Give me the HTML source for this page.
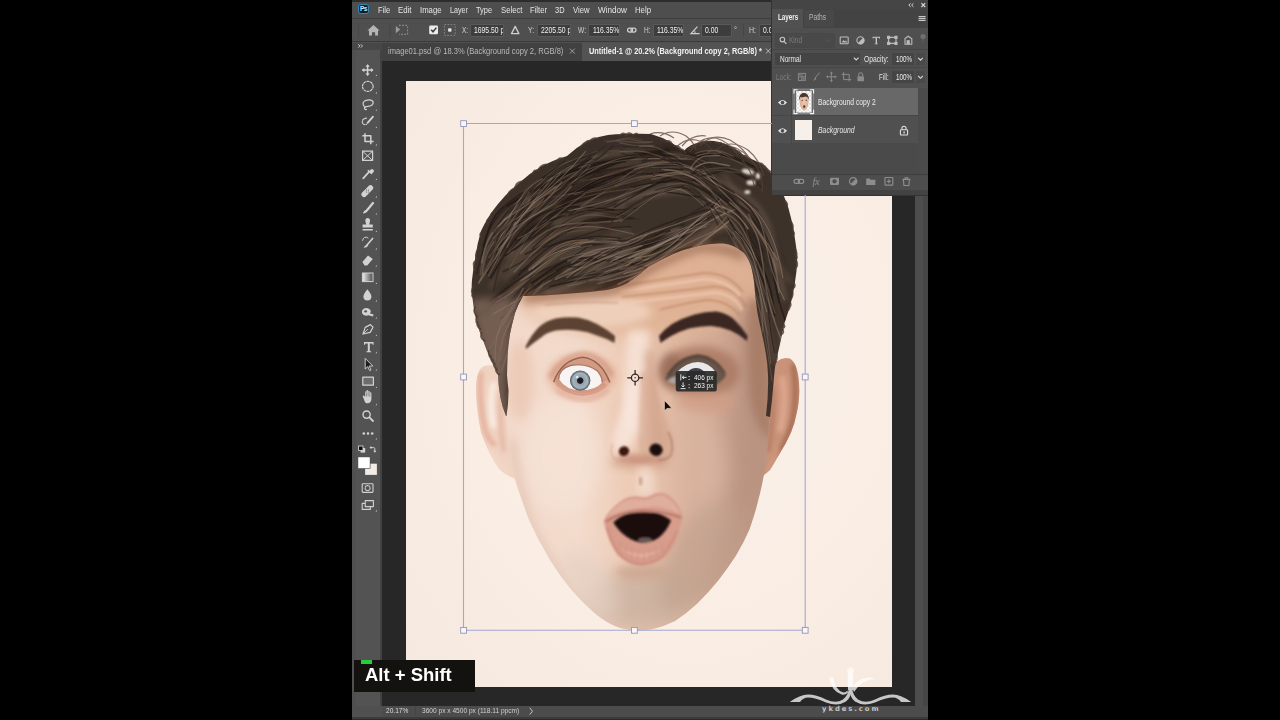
<!DOCTYPE html>
<html lang="en">
<head>
<meta charset="utf-8">
<title>Photoshop – Free Transform</title>
<style>
html,body{margin:0;padding:0;background:#000;}
body{width:1280px;height:720px;overflow:hidden;position:relative;font-family:"Liberation Sans",sans-serif;}
.a{position:absolute;}
.t{position:absolute;line-height:0;white-space:pre;transform-origin:0 50%;font-family:"Liberation Sans",sans-serif;}
#win{left:352px;top:0;width:576px;height:720px;background:#4f4f4f;overflow:hidden;}
/* all children of #stage use page coordinates */
#stage{left:0;top:0;width:1280px;height:720px;}
.inp{position:absolute;background:#3d3d3d;box-shadow:0 0 0 0.5px #646464;overflow:hidden;}
.inp span{position:absolute;left:2.6px;top:0;font-size:8.5px;line-height:10.8px;color:#f0f0f0;white-space:pre;transform:scaleX(0.8);transform-origin:0 50%;}
</style>
</head>
<body>
<div class="a" id="stage">
  <!-- window base -->
  <div class="a" style="left:352px;top:0;width:576px;height:720px;background:#505050;"></div>
  <!-- top dark hairline -->
  <div class="a" style="left:352px;top:0;width:576px;height:1.5px;background:#2c2c2c;"></div>
  <!-- menu bar -->
  <div class="a" style="left:352px;top:1.5px;width:420px;height:17px;background:#4e4e4e;"></div>
  <div class="a" style="left:352px;top:18px;width:420px;height:1.3px;background:#3e3e3e;"></div>
  <!-- options bar -->
  <div class="a" style="left:352px;top:19.3px;width:420px;height:22px;background:#4f4f4f;"></div>
  <div class="a" style="left:352px;top:41.2px;width:420px;height:1.3px;background:#3a3a3a;"></div>
  <!-- tab bar -->
  <div class="a" style="left:352px;top:42.5px;width:420px;height:18.5px;background:#414141;"></div>
  <div class="a" style="left:582px;top:43px;width:190px;height:18px;background:#535353;"></div>
  <!-- workspace -->
  <div class="a" style="left:381.7px;top:61px;width:533.6px;height:645px;background:#272727;"></div>
  <!-- left tool column -->
  <div class="a" style="left:352px;top:42.5px;width:29.7px;height:677.5px;background:#505050;"></div>
  <div class="a" style="left:356px;top:50px;width:24.5px;height:656px;background:#535353;"></div>
  <div class="a" style="left:352px;top:42.5px;width:29.7px;height:7.5px;background:#474747;"></div>
  <div class="a" style="left:379.6px;top:50px;width:2.1px;height:656px;background:#424242;"></div>
  <!-- right scrollbar strip -->
  <div class="a" style="left:915.3px;top:61px;width:12.5px;height:645px;background:#4d4d4d;"></div>
  <div class="a" style="left:923px;top:61px;width:5px;height:659px;background:#464646;"></div>
  <!-- status bar -->
  <div class="a" style="left:381.7px;top:705.7px;width:546px;height:11px;background:#4c4c4c;"></div>
  <div class="a" style="left:352px;top:716.6px;width:576px;height:3.4px;background:#3b3b3b;"></div>
  <div class="a" style="left:352px;top:719px;width:576px;height:1px;background:#2a2a2a;"></div>

  <!-- canvas document -->
  <div class="a" id="doc" style="left:406px;top:81px;width:485.7px;height:605.7px;background:#f9ede4;overflow:hidden;">
  </div>
  <svg class="a" id="photo" style="left:406px;top:81px;" width="485.7" height="605.7" viewBox="406 81 485.7 605.7">
    <defs>
      <radialGradient id="bgG" cx="0.58" cy="0.45" r="0.78">
        <stop offset="0" stop-color="#faf0e8"/><stop offset="0.6" stop-color="#f9ede4"/><stop offset="1" stop-color="#f6e9df"/>
      </radialGradient>
      <linearGradient id="skinG" x1="505" y1="0" x2="770" y2="0" gradientUnits="userSpaceOnUse">
        <stop offset="0" stop-color="#f2d9ca"/><stop offset="0.28" stop-color="#f3dccd"/><stop offset="0.5" stop-color="#ecc8b1"/>
        <stop offset="0.72" stop-color="#d7b09b"/><stop offset="1" stop-color="#bf9783"/>
      </linearGradient>
      <linearGradient id="hairG" x1="0" y1="134" x2="0" y2="420" gradientUnits="userSpaceOnUse">
        <stop offset="0" stop-color="#3a2f29"/><stop offset="0.5" stop-color="#3e312a"/><stop offset="1" stop-color="#41332a"/>
      </linearGradient>
      <radialGradient id="irisG" cx="0.5" cy="0.5" r="0.5">
        <stop offset="0" stop-color="#15171b"/><stop offset="0.27" stop-color="#1d2026"/><stop offset="0.36" stop-color="#93a2ae"/>
        <stop offset="0.74" stop-color="#a7b4be"/><stop offset="0.88" stop-color="#6d7c89"/><stop offset="1" stop-color="#48535e"/>
      </radialGradient>
      <filter id="b1" x="-20%" y="-20%" width="140%" height="140%"><feGaussianBlur stdDeviation="1"/></filter>
      <filter id="b2" x="-30%" y="-30%" width="160%" height="160%"><feGaussianBlur stdDeviation="2.2"/></filter>
      <filter id="b4" x="-40%" y="-40%" width="180%" height="180%"><feGaussianBlur stdDeviation="4.5"/></filter>
      <filter id="b8" x="-50%" y="-50%" width="200%" height="200%"><feGaussianBlur stdDeviation="9"/></filter>
      <filter id="b05" x="-10%" y="-10%" width="120%" height="120%"><feGaussianBlur stdDeviation="0.55"/></filter>
      <clipPath id="faceClip"><path id="faceP" d="M505 300 L504 375 Q505 420 512 465 L514.6 478 Q518 490 529 520 Q538 540 550 560 Q560 576 572 590.6 Q582 602 594 612.5 Q604 621 613.8 625.6 Q624 630 635.6 630.4 Q645 630.6 653 629 Q664 626.4 675 621 Q686 614 697 603.8 Q708 593 718.8 579.7 Q728 568 736 555.6 Q744 542 749.4 529.4 Q755 514 758 501 Q762 486 764 474 Q768 455 769 420 L769 300 Q764 215 640 210 Q516 215 505 300Z"/></clipPath>
      <clipPath id="hairClip"><path id="hairP" d="M506 416 Q499 400 498 375 Q494 364 492 361 Q486 350 483 340 Q479 331 477 323 Q474 312 473 302 Q471 290 472 280 Q473 270 475 260 Q477 244 481 231 Q488 216 498 204 Q508 192 519 183 Q530 173 542 166 Q554 160 567 156 Q577 147 587.5 141 Q598 136.4 608 135 Q618 133.6 629 134 Q640 133.4 651 134 Q662 137 672 143 Q679 148 684 151 Q690 144 700 142.6 Q707 140 714 141 Q721 142 728 145 Q737 150 745 156 Q754 160 762 164 Q767 168 770 172 Q778 184 784.5 197.5 Q789 208 791 218 Q794 229 795 239 Q797 250 797 260 Q797 271 795 282 Q793.6 292 791 302.5 Q788 313 784.5 323 Q782 334 780 344 Q778 353 776 361 Q774.6 369 774 377.5 Q773 390 772 400 L770 417 L766 416 Q768.6 395 768 375 Q767.6 364 766 354.6 Q764.4 344 762 334 Q759.4 323 757.5 313 Q756 302 755 292 Q754.4 281 752.5 272 Q750 260 744 253 Q735 245 723 243.6 Q710 243 698 246 Q685 249 673 254 Q660 260 648 267 Q638 276 627.5 283 Q618 288 607 290 Q586 293 565 294 Q544 296 523 296 Q518 304 515 313 Q512 324 510 334 Q508 346 507.5 357 L507 375 Q507.6 384 508.5 390 Q508.6 404 506.5 416Z"/></clipPath>
    </defs>
    <!-- backdrop -->
    <rect x="406" y="81" width="486" height="606" fill="url(#bgG)"/>

    <!-- ears -->
    <g filter="url(#b05)">
      <path id="earL" d="M503 374 Q494 362 483 366.6 Q475.4 372 476 392 Q476.6 412 481 432.5 Q485 444 489.6 453 Q494 462 500 470 Q507 476 515 478.6 L514 430Z" fill="#f0d2c1"/>
      <path id="earR" d="M768 372 Q778 355 790 358.6 Q799 364 799.4 391 Q799 404 797 412 Q795 423 791 432.5 Q786 444 780 453 Q775 462 770 470 L763 476 L764 430Z" fill="#c99279"/>
    </g>
    <clipPath id="earLc"><use href="#earL"/></clipPath>
    <clipPath id="earRc"><use href="#earR"/></clipPath>
    <g clip-path="url(#earLc)"><g filter="url(#b2)">
      <path d="M481 372 Q478 400 485 430 Q489 440 495 446" fill="none" stroke="#e0a793" stroke-width="4.5" opacity="0.85"/>
      <path d="M494 382 Q488 402 494 428" fill="none" stroke="#fbeee6" stroke-width="5.5" opacity="0.95"/>
      <path d="M502 392 Q498 420 504 452" fill="none" stroke="#e2b4a2" stroke-width="5" opacity="0.8"/>
      <path d="M488 448 Q496 464 510 474" fill="none" stroke="#f3d9cb" stroke-width="5" opacity="0.8"/>
    </g></g>
    <g clip-path="url(#earRc)"><g filter="url(#b2)">
      <path d="M793 364 Q798 390 793 420 Q788 438 778 456" fill="none" stroke="#a3694f" stroke-width="5" opacity="0.9"/>
      <path d="M782 376 Q787 400 780 432" fill="none" stroke="#dda88d" stroke-width="6.5" opacity="0.95"/>
      <path d="M772 388 Q774 420 768 452" fill="none" stroke="#b37b62" stroke-width="5" opacity="0.8"/>
      <path d="M778 448 Q774 462 766 472" fill="none" stroke="#cf9a82" stroke-width="5" opacity="0.8"/>
    </g></g>

    <!-- face base -->
    <use href="#faceP" fill="url(#skinG)" filter="url(#b05)"/>
    <g clip-path="url(#faceClip)">
      <!-- forehead tan -->
      <ellipse cx="640" cy="284" rx="130" ry="52" fill="#e0b294" opacity="0.9" filter="url(#b8)"/>
      <ellipse cx="592" cy="312" rx="60" ry="16" fill="#f2d6c2" opacity="0.8" filter="url(#b4)"/>
      <!-- right side shadow -->
      <path d="M770 300 L770 480 Q752 540 700 604 Q720 540 726 470 Q732 380 740 300Z" fill="#b28d7b" opacity="0.55" filter="url(#b8)"/>
      <path d="M690 400 Q720 420 730 470 Q720 540 690 580 Q700 500 690 400Z" fill="#dcb9a4" opacity="0.5" filter="url(#b8)"/>
      <path d="M771 300 L771 440 Q756 430 750 400 Q746 360 748 300Z" fill="#a2765f" opacity="0.7" filter="url(#b4)"/>
      <!-- left cheek highlight -->
      <ellipse cx="562" cy="455" rx="40" ry="58" fill="#f7e6db" opacity="0.55" filter="url(#b8)"/>
      <path d="M512 440 Q516 480 530 522 Q548 560 572 592 Q596 616 622 628" fill="none" stroke="#dfbfae" stroke-width="7" opacity="0.7" filter="url(#b4)"/>
      <!-- left temple pink -->
      <ellipse cx="520" cy="380" rx="14" ry="40" fill="#ecc6b3" opacity="0.7" filter="url(#b4)"/>
      <!-- eye sockets -->
      <ellipse cx="582" cy="376" rx="34" ry="22" fill="#e2ad95" opacity="0.8" filter="url(#b4)"/>
      <path d="M550 378 Q562 356 584 354 Q602 356 612 376" fill="none" stroke="#cf937a" stroke-width="5" opacity="0.7" filter="url(#b2)"/>
      <path d="M556 390 Q570 400 586 400 Q600 398 608 390" fill="none" stroke="#dfa792" stroke-width="4" opacity="0.7" filter="url(#b2)"/>
      <ellipse cx="700" cy="372" rx="40" ry="26" fill="#ab7963" opacity="0.88" filter="url(#b4)"/>
      <ellipse cx="671" cy="370" rx="12" ry="17" fill="#8c624f" opacity="0.6" filter="url(#b4)"/>
      <ellipse cx="706" cy="402" rx="30" ry="10" fill="#d09c84" opacity="0.7" filter="url(#b4)"/>
      <!-- between brows / nose bridge light -->
      <path d="M628 330 Q622 380 626 430 L644 436 Q646 380 650 330Z" fill="#f6e2d6" opacity="0.9" filter="url(#b4)"/>
      <!-- nose right side shadow -->
      <path d="M652 350 Q654 400 668 436 Q672 452 662 462 L650 456 Q648 400 646 352Z" fill="#c49078" opacity="0.75" filter="url(#b4)"/>
      <!-- nose left shading -->
      <path d="M618 400 Q612 430 610 450 Q616 460 626 458 Q622 430 624 400Z" fill="#e6bca6" opacity="0.7" filter="url(#b4)"/>
      <!-- under nose -->
      <ellipse cx="640" cy="462" rx="30" ry="7" fill="#d09f88" opacity="0.75" filter="url(#b4)"/>
      <path d="M638 466 L636 496 L656 494 L652 466Z" fill="#f6e6dc" opacity="0.6" filter="url(#b4)"/>
      <ellipse cx="640.6" cy="481" rx="1.8" ry="4.6" fill="#b98a76" opacity="0.6" filter="url(#b1)"/>
      <!-- chin stubble -->
      <ellipse cx="642" cy="600" rx="50" ry="30" fill="#ccb3a1" opacity="0.9" filter="url(#b8)"/>
      <ellipse cx="700" cy="556" rx="30" ry="62" fill="#bfa08d" opacity="0.7" filter="url(#b8)" transform="rotate(30 700 556)"/>
      <ellipse cx="590" cy="585" rx="22" ry="40" fill="#e3cfc1" opacity="0.7" filter="url(#b8)" transform="rotate(-35 590 585)"/>
      <!-- below lip shadow -->
      <ellipse cx="641" cy="572" rx="26" ry="7" fill="#c9a08a" opacity="0.7" filter="url(#b4)"/>
      <!-- forehead wrinkles -->
      <g fill="none" filter="url(#b1)">
        <g stroke="#b9805f" stroke-width="2" opacity="0.6">
          <path d="M620 286 Q662 279.6 703 273 Q728 272 743 292"/>
          <path d="M622 297 Q672 292 714 286.6 Q737 288 746 307"/>
          <path d="M660 309.6 Q686 303 706 300 Q728 300 740 316"/>
          <path d="M545 305 Q580 301 618 303" opacity="0.6"/>
        </g>
        <g stroke="#f3d3bc" stroke-width="2.4" opacity="0.65">
          <path d="M620 291.4 Q662 285.6 703 279.4 Q726 279 740 296"/>
          <path d="M630 302.6 Q672 297.6 714 292.6 Q734 294 742 310"/>
        </g>
      </g>
    </g>

    <!-- nose planes -->
    <g clip-path="url(#faceClip)">
      <path d="M641 372 Q638 410 637.6 444 Q640 462 650 460 Q666 462 672 448 Q674 436 664 420 Q652 396 647 372Z" fill="#d9ad96" opacity="0.7" filter="url(#b2)"/>
      <path d="M630 380 Q620 410 613 432 Q608 446 614 456 Q624 450 634 444 L636 380Z" fill="#f9e8df" opacity="0.8" filter="url(#b4)"/>
      <ellipse cx="640" cy="459" rx="22" ry="4.6" fill="#c9937c" opacity="0.7" filter="url(#b2)"/>
    </g>
    <!-- nostrils -->
    <g filter="url(#b1)">
      <ellipse cx="624" cy="451.2" rx="5.2" ry="4.8" fill="#3e120b" transform="rotate(-30 624 451.2)"/>
      <ellipse cx="656" cy="449.8" rx="6.6" ry="6.2" fill="#1c0c0a" transform="rotate(20 656 449.8)"/>
    </g>
    <g fill="none" filter="url(#b1)" opacity="0.6">
      <path d="M612.4 444 Q609.6 452 613.6 458 Q618 461 624 460" stroke="#d8a38c" stroke-width="1.6"/>
      <path d="M668 432 Q674.6 444 671 455 Q666 461 658 459.6" stroke="#a87660" stroke-width="2"/>
      <path d="M630 459 Q640 464 650 459" stroke="#c99078" stroke-width="1.6"/>
    </g>

    <!-- brows -->
    <g filter="url(#b1)">
      <path d="M525.6 346.6 Q531 335 539 327 Q546 321 555.5 318.6 Q566 316.6 578 317.6 Q588 319.4 597 324 Q607 329.4 615 336 L614.6 343 Q606 338 597 335.4 Q588 331.6 578 330.4 Q566 329.2 555.5 330.6 Q547 332.6 541.7 337 Q534 342.4 526 349Z" fill="#5b4233"/>
      <path d="M659 336 Q664.6 329 672 324 Q682 318 694.4 314.4 Q706 311.4 716.7 311.6 Q726 313 733 318.6 Q741 326 747.6 336 L747 341 Q739 334 730.5 330.4 Q721 327 711 326 Q700 326.2 689 328.6 Q680 331.4 672 335.6 Q666 339 660.6 343Z" fill="#3a2820"/>
    </g>

    <!-- left eye -->
    <g filter="url(#b05)">
      <path d="M553.6 382 Q562 360 582.6 357.6 Q601 359.6 609.6 382.4 Q599 394.4 582 394.8 Q565 394 553.6 382Z" fill="#d39a83" filter="url(#b1)"/>
      <path d="M559.2 379.4 Q559.6 369 571 366 Q586 363.4 597 371.4 Q602 377 601.6 383 Q596 390 581 390.2 Q566 390.2 559.2 379.4Z" fill="#f7f4f3"/>
      <circle cx="580.2" cy="380.6" r="10.2" fill="url(#irisG)"/>
      <circle cx="577.2" cy="377.2" r="1.4" fill="#e8eef4" opacity="0.85"/>
      <path d="M553.6 382 Q562 359.6 582.6 357.2 Q601 359.2 609.8 382.4" fill="none" stroke="#8a5846" stroke-width="1.6" opacity="0.85"/>
      <path d="M558.6 379.6 Q559 368.4 571 365.4 Q586 362.8 597.4 370.8 Q602.4 376.6 602.2 382" fill="none" stroke="#9a6a58" stroke-width="1.1" opacity="0.75"/>
      <path d="M557 384.6 Q568 394.6 583 395 Q597 394 606 385.6" fill="none" stroke="#d79d8a" stroke-width="1.5"/>
      <ellipse cx="606.6" cy="382.6" rx="2.4" ry="1.8" fill="#e3a998"/>
    </g>
    <!-- right eye -->
    <g filter="url(#b1)">
      <path d="M665 379 Q676 357 698 354.6 Q716 356 726 376 Q716 389 698 390 Q678 389 665 379Z" fill="#6a564c"/>
      <path d="M667.6 381 Q671 377 675.8 376.4 L675.8 384.4 Q671 384 667.6 381Z" fill="#d6cdc9" opacity="0.65"/>
    </g>
    <g filter="url(#b05)">
      <path d="M677 372 Q686 362.6 698 362 Q709 362.6 715.6 372 Q709 384 698 385 Q686 384 677 372Z" fill="#e9e9ec"/>
      <circle cx="696" cy="378.6" r="10.6" fill="#3f4045"/>
      <circle cx="696" cy="379" r="4" fill="#141416"/>
    </g>
    <path d="M668 376 Q678 358 698 356 Q716 357.6 725 374" fill="none" stroke="#4a3a33" stroke-width="2.4" opacity="0.7" filter="url(#b1)"/>

    <!-- mouth -->
    <g filter="url(#b1)">
      <!-- lip mass -->
      <path d="M603.6 521 Q609 509 622.5 500 Q632 494.6 641 497 Q646 498 650 496 Q657 491.6 664 493 Q671 496 676 502.6 Q681 509.6 683 517 Q681 526 677 538 Q671 553 662 559.6 Q651 566.4 640 566 Q628 565 617.6 555 Q609 543 603.6 521Z" fill="#d79c8b"/>
      <!-- upper lip lighter top -->
      <path d="M607 517 Q613 507.6 623.6 501.6 Q632 497.6 641 499.8 Q646 500.6 650.6 498.6 Q657 494.6 663.4 495.6 Q670 498.6 675 505 Q678 509 680 514 Q668 508 656 506.6 Q646 507 641 508 Q626 508.6 607 517Z" fill="#e0ae9d"/>
      <!-- lower lip highlight -->
      <path d="M620 548 Q630 557 641 558 Q652 557.4 661 549 Q652 553 641 553.6 Q630 553 620 548Z" fill="#e3b0a2" opacity="0.8"/>
    </g>
    <g filter="url(#b1)">
      <path d="M613.4 522.4 Q620 515.4 630 513.4 Q642 511.6 655 513 Q664 514.6 671 520.6 Q667 531 659 537.6 Q650 543.4 641 542.8 Q630 540.6 622 533 Q616 527 613.4 522.4Z" fill="#1c0c09"/>
      <ellipse cx="645" cy="540" rx="7" ry="2.6" fill="#a89892" opacity="0.55"/>
    </g>
    <g fill="none" filter="url(#b1)">
      <path d="M606 521.6 Q618 513 641 510.6 Q662 511 681 517.6" stroke="#8c4f41" stroke-width="1.8" opacity="0.55"/>
      <path d="M607 527 Q612 547 622 556.4 Q632 564 642 564 Q654 563 662 556 Q670 547 677 531" stroke="#c4877a" stroke-width="2" opacity="0.6"/>
      <path d="M626 546v8 M632 549v9 M638 550.6v10 M644 551v10 M650 550v10 M656 547.6v9 M662 544v8 M621 542l-2 6" stroke="#c07f72" stroke-width="0.9" opacity="0.5"/>
    </g>

    <!-- hair -->
    <use href="#hairP" fill="url(#hairG)" filter="url(#b05)"/>
    <g clip-path="url(#hairClip)" fill="none" stroke-linecap="round">
<g filter="url(#b2)">
<path d="M607.2 219.8C582.4 228.5 575.5 223.6 550.5 231.2" stroke="#2a201b" stroke-width="8.3" opacity="0.38"/>
<path d="M609.4 234.2C562.8 240.8 550.9 241.5 511.8 278.7" stroke="#2a201b" stroke-width="5.4" opacity="0.49"/>
<path d="M609.3 218.2C570.8 216.8 564.1 222.0 533.5 247.0" stroke="#1e1613" stroke-width="6.0" opacity="0.49"/>
<path d="M657.2 257.7C594.4 237.5 581.6 248.8 522.5 287.0" stroke="#2f251f" stroke-width="8.5" opacity="0.43"/>
<path d="M601.8 239.5C537.6 241.9 537.5 269.1 481.5 313.6" stroke="#231a16" stroke-width="6.5" opacity="0.52"/>
<path d="M617.6 257.6C587.8 260.4 581.7 264.4 551.5 272.5" stroke="#2f251f" stroke-width="5.5" opacity="0.46"/>
<path d="M587.1 243.2C559.7 253.9 554.6 259.1 526.0 268.9" stroke="#2f251f" stroke-width="7.1" opacity="0.50"/>
<path d="M650.6 273.5C677.3 259.4 680.3 250.3 713.0 240.1" stroke="#231a16" stroke-width="7.5" opacity="0.37"/>
<path d="M603.0 284.0C632.7 272.5 641.3 276.1 670.1 261.9" stroke="#1e1613" stroke-width="8.8" opacity="0.50"/>
<path d="M600.3 259.2C625.8 235.8 641.7 253.1 667.5 228.8" stroke="#231a16" stroke-width="7.1" opacity="0.39"/>
<path d="M616.5 278.9C657.4 267.8 666.1 263.5 701.9 236.3" stroke="#2a201b" stroke-width="8.2" opacity="0.54"/>
<path d="M604.5 285.5C659.5 278.5 661.4 256.6 707.9 227.5" stroke="#2f251f" stroke-width="8.7" opacity="0.60"/>
<path d="M551.9 275.6C618.2 267.4 621.8 235.0 682.7 226.2" stroke="#2a201b" stroke-width="6.6" opacity="0.53"/>
<path d="M559.7 195.5C588.1 172.2 595.7 170.1 631.9 170.3" stroke="#2a201b" stroke-width="9.5" opacity="0.60"/>
<path d="M520.4 229.2C572.4 168.4 604.0 201.8 667.4 168.1" stroke="#231a16" stroke-width="6.0" opacity="0.62"/>
<path d="M533.7 193.6C585.0 181.4 590.4 159.5 647.0 153.7" stroke="#2a201b" stroke-width="9.6" opacity="0.53"/>
<path d="M545.2 198.9C583.0 179.9 592.6 177.9 633.7 167.8" stroke="#231a16" stroke-width="8.9" opacity="0.43"/>
<path d="M537.1 196.6C582.8 179.1 590.9 167.5 640.6 159.8" stroke="#2a201b" stroke-width="7.7" opacity="0.52"/>
<path d="M546.3 217.9C569.0 196.5 573.6 190.2 606.8 186.9" stroke="#2a201b" stroke-width="8.3" opacity="0.60"/>
<path d="M530.8 236.3C578.7 190.0 601.0 206.2 662.7 184.9" stroke="#1e1613" stroke-width="10.0" opacity="0.50"/>
<path d="M724.7 185.8C737.9 206.4 744.5 208.1 763.5 227.2" stroke="#2f251f" stroke-width="9.9" opacity="0.43"/>
<path d="M732.2 190.6C761.7 220.1 771.6 225.9 783.3 276.2" stroke="#2a201b" stroke-width="6.4" opacity="0.60"/>
<path d="M721.4 199.3C746.3 221.8 742.7 234.1 767.3 267.3" stroke="#2a201b" stroke-width="6.3" opacity="0.43"/>
<path d="M733.0 234.4C741.1 261.7 739.7 270.3 761.5 307.7" stroke="#2a201b" stroke-width="5.2" opacity="0.40"/>
<path d="M713.7 195.5C743.8 208.3 749.2 212.9 762.1 248.7" stroke="#2a201b" stroke-width="9.4" opacity="0.58"/>
<path d="M743.2 209.2C762.5 252.1 781.7 259.4 779.9 328.5" stroke="#1e1613" stroke-width="6.2" opacity="0.47"/>
<path d="M623.8 205.7C593.2 211.5 587.7 218.7 555.0 223.1" stroke="#8f7b6a" stroke-width="4.2" opacity="0.34"/>
<path d="M597.6 228.5C553.1 229.1 545.3 235.3 510.7 268.4" stroke="#76614f" stroke-width="5.3" opacity="0.37"/>
<path d="M620.7 248.0C566.3 253.1 548.9 243.1 510.8 293.7" stroke="#7d6a5b" stroke-width="5.4" opacity="0.32"/>
<path d="M649.2 259.8C579.6 247.2 562.5 245.7 501.2 299.7" stroke="#76614f" stroke-width="5.1" opacity="0.34"/>
<path d="M581.6 220.7C541.4 247.0 520.3 238.0 490.5 286.8" stroke="#76614f" stroke-width="4.1" opacity="0.34"/>
<path d="M629.0 231.6C574.7 243.3 557.7 237.0 503.6 278.4" stroke="#9a8674" stroke-width="3.5" opacity="0.24"/>
<path d="M632.6 277.6C659.4 258.2 669.6 263.5 699.2 248.5" stroke="#8a6c58" stroke-width="4.5" opacity="0.32"/>
<path d="M658.8 268.9C683.4 262.7 685.3 255.2 706.1 240.1" stroke="#8f7b6a" stroke-width="6.6" opacity="0.42"/>
<path d="M589.8 279.1C615.7 265.3 622.2 262.8 652.8 254.0" stroke="#8f7b6a" stroke-width="4.7" opacity="0.37"/>
<path d="M600.0 280.6C620.5 265.5 630.5 276.0 652.5 261.1" stroke="#8f7b6a" stroke-width="4.5" opacity="0.46"/>
<path d="M658.1 268.5C684.9 245.9 689.9 238.9 725.4 226.0" stroke="#8a6c58" stroke-width="6.8" opacity="0.38"/>
<path d="M630.6 271.5C672.1 242.5 691.1 249.6 732.4 206.9" stroke="#76614f" stroke-width="4.6" opacity="0.40"/>
<path d="M566.1 271.6C613.1 245.1 624.2 239.6 678.0 228.9" stroke="#9a8674" stroke-width="5.4" opacity="0.36"/>
<path d="M546.5 292.8C592.9 284.2 591.0 256.7 636.9 251.0" stroke="#8f7b6a" stroke-width="5.3" opacity="0.41"/>
<path d="M724.6 175.4C753.8 217.1 755.0 232.6 790.3 281.8" stroke="#8a6c58" stroke-width="4.5" opacity="0.25"/>
<path d="M732.1 225.5C758.0 264.9 758.7 278.8 774.7 360.9" stroke="#8f7b6a" stroke-width="3.1" opacity="0.36"/>
<path d="M712.9 199.9C774.8 230.1 777.9 245.3 781.5 348.6" stroke="#8a6c58" stroke-width="5.4" opacity="0.23"/>
<path d="M738.8 202.7C770.0 220.3 763.6 232.6 775.7 269.9" stroke="#9a8674" stroke-width="5.0" opacity="0.30"/>
<path d="M712.7 178.7C777.3 204.0 769.2 226.4 785.2 299.1" stroke="#8f7b6a" stroke-width="3.6" opacity="0.35"/>
<path d="M547.0 188.5C599.5 145.1 616.5 151.2 679.9 154.9" stroke="#8f7b6a" stroke-width="3.6" opacity="0.35"/>
<path d="M522.0 215.3C570.5 182.0 582.7 173.2 644.9 159.3" stroke="#9a8674" stroke-width="3.9" opacity="0.31"/>
<path d="M544.7 224.4C599.0 189.0 620.5 208.3 685.3 183.9" stroke="#8f7b6a" stroke-width="3.3" opacity="0.31"/>
<path d="M514.6 222.2C527.8 199.2 541.7 208.1 560.1 188.2" stroke="#8a6c58" stroke-width="3.8" opacity="0.31"/>
<path d="M508.7 228.4C548.8 193.7 565.7 196.6 605.4 159.6" stroke="#1e1613" stroke-width="5.1" opacity="0.41"/>
<path d="M531.3 230.1C557.2 211.1 555.6 196.5 590.2 186.5" stroke="#1e1613" stroke-width="6.2" opacity="0.57"/>
<path d="M491.3 256.4C537.4 216.6 553.4 209.2 606.8 165.5" stroke="#231a16" stroke-width="6.3" opacity="0.37"/>
<path d="M511.4 230.7C547.7 206.4 547.9 187.8 597.3 173.1" stroke="#2f251f" stroke-width="6.4" opacity="0.42"/>
<path d="M532.4 224.3C557.1 197.8 571.3 207.1 602.8 185.9" stroke="#231a16" stroke-width="8.3" opacity="0.60"/>
<path d="M658.3 150.8C681.2 143.4 684.7 150.5 703.9 160.0" stroke="#231a16" stroke-width="5.7" opacity="0.50"/>
<path d="M644.6 159.8C666.7 146.4 671.6 151.2 692.9 160.5" stroke="#2f251f" stroke-width="7.7" opacity="0.40"/>
<path d="M644.9 159.1C675.1 149.8 679.7 164.5 705.7 166.8" stroke="#231a16" stroke-width="7.7" opacity="0.45"/>
<path d="M621.8 184.7C642.2 179.7 643.8 171.7 662.6 168.1" stroke="#2f251f" stroke-width="8.3" opacity="0.45"/>
<path d="M639.5 178.8C662.5 167.6 668.0 170.5 688.8 172.3" stroke="#76614f" stroke-width="5.8" opacity="0.21"/>
<path d="M649.7 195.8C666.8 192.2 670.4 191.6 685.9 192.7" stroke="#8f7b6a" stroke-width="5.7" opacity="0.27"/>
<path d="M622.1 200.8C670.1 185.9 683.4 168.0 718.5 215.6" stroke="#a5917f" stroke-width="5.7" opacity="0.29"/>
<path d="M487.0 240.8C514.9 198.0 524.0 189.5 570.8 163.8" stroke="#76614f" stroke-width="3.1" opacity="0.27"/>
<path d="M496.3 260.8C531.5 212.4 546.1 207.9 594.7 173.6" stroke="#a5917f" stroke-width="3.1" opacity="0.21"/>
<path d="M503.3 238.0C524.9 192.9 534.0 186.3 584.5 168.7" stroke="#8f7b6a" stroke-width="5.7" opacity="0.23"/>
<path d="M508.0 256.6C533.8 237.4 530.6 224.4 557.8 205.1" stroke="#8f7b6a" stroke-width="4.8" opacity="0.27"/>
</g>
<g filter="url(#b05)">
<path d="M632.7 218.5C581.2 217.4 573.5 230.1 525.4 254.1" stroke="#231a16" stroke-width="1.9" opacity="0.69"/>
<path d="M639.0 219.5C602.8 211.7 593.8 203.7 559.0 226.1" stroke="#2f251f" stroke-width="1.2" opacity="0.68"/>
<path d="M620.5 238.6C568.9 227.9 566.3 255.4 519.9 271.2" stroke="#231a16" stroke-width="1.1" opacity="0.73"/>
<path d="M574.7 207.4C552.4 227.4 538.1 215.8 515.6 240.6" stroke="#231a16" stroke-width="1.7" opacity="0.66"/>
<path d="M600.9 239.8C556.3 235.2 550.1 244.1 518.5 275.0" stroke="#231a16" stroke-width="1.2" opacity="0.82"/>
<path d="M603.7 202.4C557.7 208.5 548.0 212.6 511.8 245.8" stroke="#2f251f" stroke-width="1.4" opacity="0.71"/>
<path d="M636.1 207.9C581.7 218.9 557.2 190.2 510.7 250.3" stroke="#231a16" stroke-width="1.2" opacity="0.73"/>
<path d="M606.8 222.2C571.1 224.3 560.7 219.1 532.4 248.6" stroke="#231a16" stroke-width="1.1" opacity="0.81"/>
<path d="M614.3 209.8C544.7 201.5 531.5 206.1 490.7 278.1" stroke="#1e1613" stroke-width="1.8" opacity="0.69"/>
<path d="M652.2 260.4C583.5 269.4 569.6 278.3 496.0 312.1" stroke="#2f251f" stroke-width="1.0" opacity="0.83"/>
<path d="M596.1 258.8C562.2 254.8 559.0 265.7 531.2 283.3" stroke="#1e1613" stroke-width="1.6" opacity="0.81"/>
<path d="M615.7 203.7C589.9 215.2 580.4 204.2 555.9 220.4" stroke="#1e1613" stroke-width="1.1" opacity="0.61"/>
<path d="M619.8 219.0C558.5 213.5 559.8 247.1 503.3 271.5" stroke="#1e1613" stroke-width="1.5" opacity="0.53"/>
<path d="M595.2 241.0C555.6 273.7 533.1 263.2 484.2 312.1" stroke="#2a201b" stroke-width="1.4" opacity="0.78"/>
<path d="M646.6 267.7C569.8 248.2 557.9 265.6 500.6 318.9" stroke="#231a16" stroke-width="2.0" opacity="0.70"/>
<path d="M629.8 240.2C563.1 245.5 550.4 256.3 490.2 300.4" stroke="#1e1613" stroke-width="1.9" opacity="0.58"/>
<path d="M599.0 206.6C564.5 215.2 554.5 213.4 525.1 240.5" stroke="#2f251f" stroke-width="1.2" opacity="0.58"/>
<path d="M631.2 226.6C589.4 227.0 583.2 239.3 543.4 247.4" stroke="#231a16" stroke-width="1.3" opacity="0.57"/>
<path d="M568.7 213.7C534.6 219.0 533.7 231.3 507.0 253.3" stroke="#76614f" stroke-width="0.8" opacity="0.58"/>
<path d="M619.1 242.0C569.6 237.0 563.6 251.0 520.9 280.8" stroke="#a5917f" stroke-width="1.0" opacity="0.55"/>
<path d="M592.2 245.1C545.7 253.2 542.4 269.7 498.7 297.6" stroke="#8a6c58" stroke-width="1.2" opacity="0.48"/>
<path d="M649.2 259.5C612.9 260.7 604.3 247.3 568.0 260.6" stroke="#9a8674" stroke-width="1.8" opacity="0.41"/>
<path d="M568.1 215.3C538.8 225.0 536.4 234.2 510.2 253.3" stroke="#8a6c58" stroke-width="1.6" opacity="0.38"/>
<path d="M622.3 218.7C588.0 213.3 579.6 210.4 550.1 234.7" stroke="#76614f" stroke-width="1.3" opacity="0.41"/>
<path d="M633.9 234.0C571.9 219.3 559.7 224.0 514.2 272.0" stroke="#8a6c58" stroke-width="1.2" opacity="0.62"/>
<path d="M616.9 238.8C556.8 236.5 553.4 258.2 504.5 298.3" stroke="#76614f" stroke-width="1.5" opacity="0.44"/>
<path d="M586.5 230.3C557.3 231.5 553.4 237.6 530.1 256.8" stroke="#7d6a5b" stroke-width="0.8" opacity="0.35"/>
<path d="M587.9 239.6C557.2 240.4 554.0 248.5 529.0 268.9" stroke="#8a6c58" stroke-width="1.6" opacity="0.53"/>
<path d="M637.3 248.2C603.1 255.7 594.1 247.9 560.7 259.3" stroke="#8f7b6a" stroke-width="0.9" opacity="0.48"/>
<path d="M628.5 242.5C584.7 246.0 569.8 230.4 532.4 268.4" stroke="#9a8674" stroke-width="1.5" opacity="0.40"/>
<path d="M580.3 246.2C554.9 250.3 550.4 254.2 528.9 270.6" stroke="#9a8674" stroke-width="1.1" opacity="0.59"/>
<path d="M621.0 219.8C576.6 228.4 559.0 210.7 520.5 253.3" stroke="#8f7b6a" stroke-width="1.7" opacity="0.45"/>
<path d="M595.4 239.9C545.7 252.5 545.5 274.5 495.7 302.2" stroke="#8f7b6a" stroke-width="1.1" opacity="0.35"/>
<path d="M599.0 251.5C557.5 276.0 547.9 283.1 493.4 313.9" stroke="#8f7b6a" stroke-width="1.4" opacity="0.52"/>
<path d="M532.2 277.5C519.4 290.9 515.2 293.2 503.6 311.8" stroke="#231a16" stroke-width="1.2" opacity="0.53"/>
<path d="M529.6 290.7C504.7 315.0 515.7 330.2 493.5 380.4" stroke="#231a16" stroke-width="1.6" opacity="0.56"/>
<path d="M519.4 301.5C518.7 318.3 508.5 319.4 506.7 341.2" stroke="#2a201b" stroke-width="1.1" opacity="0.62"/>
<path d="M525.3 304.8C501.5 330.7 524.7 345.9 504.1 396.4" stroke="#231a16" stroke-width="0.9" opacity="0.42"/>
<path d="M534.2 285.1C517.6 291.3 523.4 300.8 510.4 315.2" stroke="#1e1613" stroke-width="1.8" opacity="0.45"/>
<path d="M522.1 296.3C501.6 313.9 502.1 320.9 499.2 356.0" stroke="#2f251f" stroke-width="0.9" opacity="0.45"/>
<path d="M538.5 285.3C527.7 299.3 516.1 296.3 511.0 322.0" stroke="#2f251f" stroke-width="1.6" opacity="0.63"/>
<path d="M534.6 294.6C525.1 303.1 521.2 304.6 517.2 322.6" stroke="#2a201b" stroke-width="1.1" opacity="0.63"/>
<path d="M531.2 283.7C522.1 300.5 514.9 301.4 502.9 323.9" stroke="#8a6c58" stroke-width="1.2" opacity="0.32"/>
<path d="M523.1 288.2C512.4 314.3 494.3 315.7 495.0 360.1" stroke="#9a8674" stroke-width="1.2" opacity="0.44"/>
<path d="M521.2 302.0C509.0 322.1 512.7 330.0 500.4 360.7" stroke="#76614f" stroke-width="1.4" opacity="0.36"/>
<path d="M528.1 296.9C511.9 322.2 495.9 326.7 499.1 382.3" stroke="#8a6c58" stroke-width="1.5" opacity="0.29"/>
<path d="M542.2 286.5C518.2 306.7 518.2 317.1 501.8 371.0" stroke="#9a8674" stroke-width="1.4" opacity="0.31"/>
<path d="M526.2 301.3C521.0 313.9 523.0 318.6 512.7 334.8" stroke="#8a6c58" stroke-width="1.0" opacity="0.42"/>
<path d="M543.9 282.0C529.1 305.3 509.7 302.7 500.8 349.7" stroke="#8f7b6a" stroke-width="1.0" opacity="0.28"/>
<path d="M555.4 271.2C519.2 291.2 515.2 302.6 489.2 349.3" stroke="#9a8674" stroke-width="0.9" opacity="0.34"/>
<path d="M556.8 280.1C623.9 242.2 637.1 231.4 706.7 209.6" stroke="#1e1613" stroke-width="1.5" opacity="0.61"/>
<path d="M550.0 279.1C599.1 276.6 609.4 274.2 647.7 241.1" stroke="#2f251f" stroke-width="2.1" opacity="0.53"/>
<path d="M588.0 275.4C655.0 269.4 655.5 240.3 711.0 216.9" stroke="#1e1613" stroke-width="1.4" opacity="0.51"/>
<path d="M586.9 266.8C628.2 243.4 637.7 237.8 683.5 224.2" stroke="#2a201b" stroke-width="1.7" opacity="0.75"/>
<path d="M631.6 262.2C677.1 243.2 679.0 224.0 727.8 209.4" stroke="#2f251f" stroke-width="2.1" opacity="0.67"/>
<path d="M619.1 259.7C645.7 246.7 651.0 242.2 679.8 234.3" stroke="#1e1613" stroke-width="2.0" opacity="0.82"/>
<path d="M586.0 281.8C611.6 273.8 614.1 263.2 643.6 257.8" stroke="#231a16" stroke-width="1.3" opacity="0.69"/>
<path d="M553.0 277.6C580.0 256.8 588.1 256.4 622.2 249.5" stroke="#2f251f" stroke-width="1.5" opacity="0.71"/>
<path d="M609.4 255.3C638.0 247.9 644.5 246.9 669.7 231.0" stroke="#231a16" stroke-width="1.7" opacity="0.71"/>
<path d="M624.8 259.7C674.0 253.3 672.1 225.0 721.9 212.5" stroke="#2f251f" stroke-width="1.6" opacity="0.84"/>
<path d="M550.0 286.4C633.4 267.4 656.8 273.5 719.2 198.4" stroke="#231a16" stroke-width="1.7" opacity="0.78"/>
<path d="M568.7 267.1C619.6 266.1 622.3 242.4 669.8 230.1" stroke="#231a16" stroke-width="1.3" opacity="0.73"/>
<path d="M605.1 256.9C657.4 241.5 663.6 227.8 712.8 201.4" stroke="#2f251f" stroke-width="1.9" opacity="0.76"/>
<path d="M621.5 277.7C651.0 259.2 657.9 256.0 691.5 246.4" stroke="#1e1613" stroke-width="1.6" opacity="0.63"/>
<path d="M587.3 260.2C617.1 237.2 632.3 254.1 662.6 231.0" stroke="#1e1613" stroke-width="1.5" opacity="0.52"/>
<path d="M595.4 289.8C627.5 282.3 631.8 272.7 664.2 264.6" stroke="#1e1613" stroke-width="2.0" opacity="0.53"/>
<path d="M574.6 275.7C633.3 231.0 666.7 260.7 722.9 197.1" stroke="#7d6a5b" stroke-width="1.1" opacity="0.56"/>
<path d="M614.0 262.9C662.3 244.2 672.0 238.5 716.7 208.1" stroke="#8f7b6a" stroke-width="1.0" opacity="0.47"/>
<path d="M634.4 258.0C684.8 253.2 678.4 223.2 721.0 205.6" stroke="#9a8674" stroke-width="1.1" opacity="0.63"/>
<path d="M637.8 276.7C672.6 273.5 676.2 264.8 702.3 243.0" stroke="#9a8674" stroke-width="1.4" opacity="0.42"/>
<path d="M604.3 271.8C655.5 260.7 656.8 235.2 709.8 223.9" stroke="#7d6a5b" stroke-width="1.2" opacity="0.49"/>
<path d="M597.9 283.7C633.9 274.7 641.7 272.4 676.0 258.0" stroke="#a5917f" stroke-width="1.0" opacity="0.44"/>
<path d="M606.1 273.9C660.8 246.8 667.3 230.7 721.0 211.7" stroke="#8f7b6a" stroke-width="0.8" opacity="0.40"/>
<path d="M572.4 283.5C626.9 243.7 642.0 240.1 706.8 221.7" stroke="#76614f" stroke-width="1.0" opacity="0.53"/>
<path d="M589.4 280.1C616.9 279.1 620.7 271.3 646.9 259.4" stroke="#76614f" stroke-width="1.2" opacity="0.51"/>
<path d="M571.5 263.1C601.3 238.2 616.7 256.7 646.9 234.8" stroke="#9a8674" stroke-width="1.3" opacity="0.50"/>
<path d="M629.0 280.8C670.8 251.8 680.2 244.7 727.0 226.0" stroke="#9a8674" stroke-width="1.2" opacity="0.44"/>
<path d="M596.6 270.7C635.8 256.8 643.4 251.1 682.0 238.8" stroke="#7d6a5b" stroke-width="1.3" opacity="0.47"/>
<path d="M610.6 261.6C640.2 246.9 650.4 252.5 677.9 234.8" stroke="#8f7b6a" stroke-width="1.3" opacity="0.65"/>
<path d="M628.4 258.3C664.2 242.1 673.7 241.4 706.6 218.1" stroke="#a5917f" stroke-width="1.0" opacity="0.59"/>
<path d="M568.1 285.7C604.0 280.7 606.8 266.0 641.2 258.0" stroke="#8a6c58" stroke-width="1.6" opacity="0.42"/>
<path d="M618.1 284.2C666.3 261.0 681.2 261.1 730.2 220.2" stroke="#9a8674" stroke-width="1.6" opacity="0.63"/>
<path d="M566.6 277.7C624.4 233.3 643.8 239.0 711.7 210.7" stroke="#8f7b6a" stroke-width="1.1" opacity="0.56"/>
<path d="M620.0 269.3C650.8 265.7 654.8 258.1 681.0 243.4" stroke="#76614f" stroke-width="1.7" opacity="0.46"/>
<path d="M624.0 273.8C679.5 258.8 678.4 230.9 735.7 209.1" stroke="#9a8674" stroke-width="1.2" opacity="0.60"/>
<path d="M608.1 280.7C670.9 264.8 685.2 261.1 727.2 216.6" stroke="#76614f" stroke-width="1.8" opacity="0.56"/>
<path d="M626.4 265.5C660.0 242.6 668.2 238.8 706.1 226.1" stroke="#9a8674" stroke-width="1.7" opacity="0.45"/>
<path d="M555.5 279.3C593.9 263.1 602.0 258.4 641.6 245.9" stroke="#9a8674" stroke-width="1.9" opacity="0.49"/>
<path d="M512.9 210.6C580.4 181.7 591.7 150.7 685.6 155.1" stroke="#231a16" stroke-width="1.1" opacity="0.74"/>
<path d="M535.9 196.9C569.8 166.6 578.2 160.3 625.5 162.2" stroke="#1e1613" stroke-width="0.9" opacity="0.85"/>
<path d="M504.3 222.1C568.3 170.0 587.0 162.0 668.3 151.2" stroke="#2f251f" stroke-width="1.9" opacity="0.73"/>
<path d="M575.6 192.8C617.7 162.6 633.4 181.5 683.2 168.9" stroke="#1e1613" stroke-width="1.2" opacity="0.72"/>
<path d="M541.3 188.5C588.8 176.1 599.0 168.5 649.1 152.2" stroke="#1e1613" stroke-width="1.9" opacity="0.83"/>
<path d="M536.1 209.2C601.7 187.5 612.2 164.3 687.6 163.0" stroke="#231a16" stroke-width="1.1" opacity="0.63"/>
<path d="M549.6 220.8C604.1 205.0 618.2 204.0 671.1 176.0" stroke="#1e1613" stroke-width="1.1" opacity="0.60"/>
<path d="M527.8 234.5C569.3 209.1 571.1 187.5 626.6 184.5" stroke="#2f251f" stroke-width="1.8" opacity="0.75"/>
<path d="M512.1 235.2C546.7 214.1 550.8 203.7 587.3 187.9" stroke="#2f251f" stroke-width="1.0" opacity="0.73"/>
<path d="M564.4 193.5C598.1 186.8 604.1 179.7 638.7 167.7" stroke="#1e1613" stroke-width="1.1" opacity="0.73"/>
<path d="M561.7 181.1C590.8 168.3 597.7 166.2 629.3 159.3" stroke="#231a16" stroke-width="1.8" opacity="0.83"/>
<path d="M538.6 206.2C558.1 181.2 570.4 189.9 595.0 175.0" stroke="#231a16" stroke-width="2.0" opacity="0.66"/>
<path d="M569.1 204.7C607.7 195.6 615.5 190.5 653.8 175.3" stroke="#2f251f" stroke-width="1.8" opacity="0.54"/>
<path d="M512.6 229.6C572.1 169.3 593.1 167.5 681.7 164.9" stroke="#1e1613" stroke-width="1.7" opacity="0.51"/>
<path d="M507.2 205.9C572.6 163.6 592.3 165.1 668.6 150.1" stroke="#231a16" stroke-width="1.8" opacity="0.83"/>
<path d="M541.4 178.1C597.4 169.5 608.9 155.0 668.2 149.2" stroke="#231a16" stroke-width="1.4" opacity="0.58"/>
<path d="M536.5 200.3C592.9 160.8 609.4 157.6 686.9 158.5" stroke="#8f7b6a" stroke-width="1.2" opacity="0.37"/>
<path d="M548.2 197.7C594.0 190.9 605.0 188.2 649.3 162.4" stroke="#7d6a5b" stroke-width="0.8" opacity="0.44"/>
<path d="M568.9 210.8C605.4 202.4 613.4 199.3 650.5 184.8" stroke="#9a8674" stroke-width="1.2" opacity="0.46"/>
<path d="M580.6 206.4C632.6 172.9 646.5 172.5 707.7 178.4" stroke="#76614f" stroke-width="1.5" opacity="0.47"/>
<path d="M575.2 180.4C611.8 179.3 618.1 168.8 655.7 162.5" stroke="#8a6c58" stroke-width="0.9" opacity="0.35"/>
<path d="M573.0 183.6C614.5 175.1 622.8 168.8 663.1 158.4" stroke="#7d6a5b" stroke-width="1.0" opacity="0.32"/>
<path d="M510.5 225.0C580.4 199.9 585.3 166.5 668.3 162.3" stroke="#8a6c58" stroke-width="0.9" opacity="0.36"/>
<path d="M568.7 193.9C603.2 189.3 610.2 185.4 642.0 171.5" stroke="#76614f" stroke-width="0.9" opacity="0.46"/>
<path d="M574.0 213.2C622.3 177.6 633.1 169.6 696.3 178.6" stroke="#7d6a5b" stroke-width="1.0" opacity="0.44"/>
<path d="M548.8 194.7C600.2 169.8 607.8 148.1 674.7 158.3" stroke="#8a6c58" stroke-width="1.3" opacity="0.46"/>
<path d="M577.2 210.9C617.6 208.4 619.4 184.9 661.8 183.2" stroke="#7d6a5b" stroke-width="1.4" opacity="0.33"/>
<path d="M573.8 194.7C625.8 187.6 636.1 175.6 692.3 171.3" stroke="#76614f" stroke-width="1.1" opacity="0.48"/>
<path d="M734.4 239.8C744.4 260.2 751.2 263.5 759.1 295.0" stroke="#1e1613" stroke-width="1.9" opacity="0.52"/>
<path d="M710.6 188.8C747.6 218.8 767.3 222.7 778.9 302.6" stroke="#2a201b" stroke-width="2.0" opacity="0.58"/>
<path d="M714.4 192.3C739.8 210.0 738.3 221.2 764.0 251.2" stroke="#2a201b" stroke-width="1.1" opacity="0.52"/>
<path d="M740.4 233.8C744.9 260.7 764.2 260.8 765.8 301.1" stroke="#2f251f" stroke-width="1.2" opacity="0.68"/>
<path d="M690.9 167.2C721.0 184.1 729.5 186.5 758.6 210.2" stroke="#2a201b" stroke-width="0.9" opacity="0.68"/>
<path d="M726.0 208.4C744.1 219.6 743.2 226.4 755.8 247.5" stroke="#231a16" stroke-width="1.6" opacity="0.69"/>
<path d="M736.6 215.9C754.5 231.0 747.1 241.9 764.9 262.3" stroke="#2f251f" stroke-width="1.1" opacity="0.52"/>
<path d="M710.6 177.5C743.9 200.9 754.0 205.3 773.2 251.7" stroke="#1e1613" stroke-width="1.1" opacity="0.77"/>
<path d="M741.2 235.1C776.9 268.3 760.6 285.1 774.5 352.6" stroke="#1e1613" stroke-width="0.9" opacity="0.75"/>
<path d="M726.1 212.0C738.3 249.0 768.7 246.7 774.4 315.6" stroke="#1e1613" stroke-width="1.6" opacity="0.76"/>
<path d="M748.7 215.7C780.4 249.0 764.8 266.2 785.6 321.1" stroke="#1e1613" stroke-width="1.8" opacity="0.62"/>
<path d="M709.0 191.3C758.3 212.1 738.1 237.4 772.4 299.8" stroke="#231a16" stroke-width="1.8" opacity="0.73"/>
<path d="M727.3 193.4C748.9 216.9 761.5 217.8 772.7 257.6" stroke="#231a16" stroke-width="1.2" opacity="0.66"/>
<path d="M719.2 194.1C749.4 211.5 762.0 212.1 769.4 258.7" stroke="#231a16" stroke-width="1.1" opacity="0.70"/>
<path d="M700.6 194.2C720.2 210.6 732.4 203.9 748.0 228.8" stroke="#a5917f" stroke-width="1.6" opacity="0.57"/>
<path d="M729.6 202.3C778.1 238.6 750.1 265.2 780.9 338.2" stroke="#a5917f" stroke-width="1.5" opacity="0.44"/>
<path d="M702.5 170.1C732.4 205.3 747.1 209.4 777.5 259.8" stroke="#8f7b6a" stroke-width="1.2" opacity="0.58"/>
<path d="M733.4 232.4C745.4 267.6 749.0 277.1 768.3 334.9" stroke="#7d6a5b" stroke-width="0.9" opacity="0.40"/>
<path d="M744.2 223.2C755.8 259.4 755.9 269.9 774.9 319.9" stroke="#7d6a5b" stroke-width="0.9" opacity="0.45"/>
<path d="M711.0 211.6C748.6 246.7 757.8 258.5 770.8 363.6" stroke="#9a8674" stroke-width="1.2" opacity="0.36"/>
<path d="M735.3 193.4C777.3 222.7 755.5 245.8 784.3 299.6" stroke="#a5917f" stroke-width="1.1" opacity="0.46"/>
<path d="M711.7 196.0C740.2 233.0 754.8 239.5 775.0 312.9" stroke="#76614f" stroke-width="1.3" opacity="0.57"/>
<path d="M690.8 168.9C739.8 201.7 768.7 197.4 782.8 277.7" stroke="#a5917f" stroke-width="1.0" opacity="0.52"/>
<path d="M748.6 214.7C762.6 244.5 775.7 248.3 778.9 292.4" stroke="#8f7b6a" stroke-width="1.7" opacity="0.51"/>
<path d="M735.5 231.4C758.4 256.2 754.2 266.9 766.8 311.9" stroke="#a5917f" stroke-width="1.0" opacity="0.57"/>
<path d="M733.4 237.9C744.7 270.0 764.6 273.5 762.4 332.0" stroke="#8f7b6a" stroke-width="1.6" opacity="0.38"/>
<path d="M725.4 227.7C748.8 268.1 756.9 280.3 772.1 380.7" stroke="#9a8674" stroke-width="0.9" opacity="0.38"/>
<path d="M708.5 207.5C739.5 215.5 741.4 223.0 756.2 260.1" stroke="#9a8674" stroke-width="1.3" opacity="0.43"/>
<path d="M489.3 243.5C502.0 222.7 499.8 213.7 524.2 200.4" stroke="#2f251f" stroke-width="1.6" opacity="0.55"/>
<path d="M482.0 255.4C489.8 215.7 497.7 210.8 530.6 188.8" stroke="#231a16" stroke-width="1.1" opacity="0.59"/>
<path d="M514.7 217.6C549.0 191.3 553.7 178.6 598.9 171.8" stroke="#231a16" stroke-width="1.0" opacity="0.54"/>
<path d="M499.9 256.2C520.0 211.6 541.6 218.0 571.7 182.5" stroke="#2a201b" stroke-width="1.0" opacity="0.70"/>
<path d="M507.6 226.2C522.8 200.6 524.3 192.7 554.1 180.6" stroke="#2a201b" stroke-width="1.7" opacity="0.71"/>
<path d="M483.0 246.4C491.4 215.6 495.8 210.6 522.5 192.5" stroke="#231a16" stroke-width="1.3" opacity="0.84"/>
<path d="M528.5 238.8C553.7 198.6 572.6 210.4 614.3 186.8" stroke="#1e1613" stroke-width="1.3" opacity="0.56"/>
<path d="M514.3 249.6C544.8 229.2 550.9 222.8 582.4 196.5" stroke="#231a16" stroke-width="1.9" opacity="0.60"/>
<path d="M493.8 236.9C539.5 204.2 529.4 167.8 597.7 158.8" stroke="#2f251f" stroke-width="1.6" opacity="0.64"/>
<path d="M493.8 290.4C504.1 237.6 512.9 231.4 564.3 210.3" stroke="#2f251f" stroke-width="1.8" opacity="0.65"/>
<path d="M508.0 235.7C536.5 211.0 546.0 208.4 574.8 180.9" stroke="#231a16" stroke-width="1.0" opacity="0.74"/>
<path d="M519.5 215.3C540.5 192.0 553.0 199.1 580.0 178.9" stroke="#2a201b" stroke-width="1.8" opacity="0.71"/>
<path d="M519.8 216.8C556.7 198.5 564.1 191.7 604.4 171.7" stroke="#2f251f" stroke-width="1.0" opacity="0.76"/>
<path d="M504.7 256.1C545.8 230.2 545.4 211.0 595.9 185.7" stroke="#231a16" stroke-width="1.3" opacity="0.84"/>
<path d="M534.8 229.6C554.8 197.3 573.2 214.2 605.0 191.1" stroke="#8a6c58" stroke-width="1.0" opacity="0.32"/>
<path d="M507.0 247.2C521.5 208.4 544.9 219.8 571.2 186.5" stroke="#a5917f" stroke-width="1.4" opacity="0.39"/>
<path d="M513.5 225.6C527.8 204.1 534.6 203.2 556.7 187.4" stroke="#8a6c58" stroke-width="1.4" opacity="0.49"/>
<path d="M493.9 251.0C506.2 222.7 512.4 219.6 534.6 201.5" stroke="#9a8674" stroke-width="1.1" opacity="0.50"/>
<path d="M492.8 238.1C528.4 208.3 526.6 190.3 571.7 165.2" stroke="#a5917f" stroke-width="0.9" opacity="0.36"/>
<path d="M509.6 268.3C541.9 208.0 552.9 198.7 633.0 188.5" stroke="#8a6c58" stroke-width="0.9" opacity="0.40"/>
<path d="M517.6 238.6C549.3 224.1 553.3 215.6 585.0 193.8" stroke="#9a8674" stroke-width="1.1" opacity="0.36"/>
<path d="M478.7 282.6C501.0 237.7 517.3 236.8 543.9 198.0" stroke="#76614f" stroke-width="1.4" opacity="0.41"/>
<path d="M482.2 273.9C486.6 230.1 513.7 236.7 529.9 199.4" stroke="#9a8674" stroke-width="1.6" opacity="0.36"/>
<path d="M481.7 262.7C488.1 223.5 504.8 225.3 525.9 197.1" stroke="#9a8674" stroke-width="1.7" opacity="0.46"/>
<path d="M513.2 204.9C542.1 183.1 540.7 166.2 581.4 158.9" stroke="#76614f" stroke-width="1.3" opacity="0.38"/>
<path d="M506.2 223.2C525.4 186.0 544.6 197.8 576.6 173.2" stroke="#76614f" stroke-width="0.8" opacity="0.39"/>
<path d="M660.8 168.9C678.6 167.6 682.0 170.5 698.5 178.4" stroke="#1e1613" stroke-width="1.6" opacity="0.59"/>
<path d="M656.8 182.8C674.1 183.0 677.8 172.8 692.8 183.0" stroke="#2a201b" stroke-width="1.8" opacity="0.78"/>
<path d="M611.8 221.3C646.6 190.3 658.8 196.1 684.3 185.5" stroke="#2f251f" stroke-width="1.6" opacity="0.76"/>
<path d="M614.5 207.1C659.4 182.7 667.3 168.4 707.5 192.5" stroke="#1e1613" stroke-width="1.8" opacity="0.63"/>
<path d="M631.3 187.2C662.3 179.0 669.8 183.9 695.4 180.2" stroke="#1e1613" stroke-width="1.1" opacity="0.60"/>
<path d="M617.7 214.9C667.8 195.7 675.3 166.3 712.9 208.4" stroke="#231a16" stroke-width="1.8" opacity="0.57"/>
<path d="M665.0 192.0C681.7 193.6 685.2 194.7 699.8 197.3" stroke="#1e1613" stroke-width="1.4" opacity="0.70"/>
<path d="M643.1 197.4C683.3 186.3 695.1 176.5 722.2 220.2" stroke="#2a201b" stroke-width="1.4" opacity="0.63"/>
<path d="M666.0 189.8C685.2 183.5 687.4 189.9 702.9 200.1" stroke="#2a201b" stroke-width="1.3" opacity="0.83"/>
<path d="M655.5 190.1C692.0 179.4 697.7 183.4 718.0 224.8" stroke="#2f251f" stroke-width="1.5" opacity="0.72"/>
<path d="M648.1 160.7C680.2 160.1 690.4 145.4 717.8 173.6" stroke="#2f251f" stroke-width="1.0" opacity="0.69"/>
<path d="M653.1 175.2C679.9 182.0 689.2 177.1 714.1 197.7" stroke="#231a16" stroke-width="1.0" opacity="0.68"/>
<path d="M642.4 160.9C669.7 146.9 675.5 144.8 699.3 161.5" stroke="#2a201b" stroke-width="0.9" opacity="0.74"/>
<path d="M661.8 178.3C696.2 169.4 696.8 184.2 721.3 205.7" stroke="#231a16" stroke-width="1.8" opacity="0.65"/>
<path d="M637.3 168.1C680.4 158.8 688.1 168.9 728.5 193.2" stroke="#2f251f" stroke-width="1.7" opacity="0.79"/>
<path d="M653.1 166.1C687.1 173.1 698.2 170.5 725.0 200.3" stroke="#2f251f" stroke-width="1.0" opacity="0.79"/>
<path d="M661.5 169.2C693.2 171.1 697.1 179.5 726.9 204.7" stroke="#8f7b6a" stroke-width="1.4" opacity="0.45"/>
<path d="M651.4 167.2C684.0 168.7 695.7 159.1 720.8 190.8" stroke="#a5917f" stroke-width="1.0" opacity="0.28"/>
<path d="M620.7 221.5C664.6 189.7 671.0 174.4 703.8 206.1" stroke="#a5917f" stroke-width="0.9" opacity="0.43"/>
<path d="M651.4 179.2C675.8 176.3 682.7 165.9 704.3 185.7" stroke="#8f7b6a" stroke-width="1.6" opacity="0.37"/>
<path d="M663.8 153.4C683.1 154.8 687.6 154.5 705.3 161.8" stroke="#8f7b6a" stroke-width="1.4" opacity="0.32"/>
<path d="M665.0 170.1C696.6 170.1 700.8 177.0 723.0 207.9" stroke="#a5917f" stroke-width="1.0" opacity="0.37"/>
<path d="M620.1 180.6C643.4 160.2 650.3 161.2 676.1 162.1" stroke="#76614f" stroke-width="1.1" opacity="0.45"/>
<path d="M639.0 168.0C671.1 158.4 677.8 160.4 705.7 173.6" stroke="#76614f" stroke-width="1.6" opacity="0.52"/>
<path d="M653.5 173.3C681.5 177.2 687.3 180.3 711.5 188.9" stroke="#76614f" stroke-width="1.6" opacity="0.30"/>
<path d="M654.3 176.1C672.7 171.9 676.7 170.3 693.4 178.1" stroke="#9a8674" stroke-width="1.0" opacity="0.45"/>
<path d="M648.3 158.7C667.4 157.4 671.7 159.1 690.7 159.4" stroke="#9a8674" stroke-width="1.4" opacity="0.31"/>
<path d="M645.5 167.5C687.4 148.7 694.9 154.0 724.6 188.9" stroke="#8f7b6a" stroke-width="0.8" opacity="0.39"/>
<path d="M616.2 217.4C650.7 198.4 656.4 193.0 681.6 188.5" stroke="#8f7b6a" stroke-width="1.4" opacity="0.33"/>
<path d="M634.0 169.4C675.0 158.8 683.4 164.9 714.8 178.6" stroke="#8f7b6a" stroke-width="1.0" opacity="0.50"/>
<path d="M484.0 273.1C496.8 242.6 501.9 236.8 521.2 209.2" stroke="#2a201b" stroke-width="1.7" opacity="0.47"/>
<path d="M517.5 208.8C541.7 167.2 556.5 170.1 598.8 150.4" stroke="#2f251f" stroke-width="1.6" opacity="0.79"/>
<path d="M493.0 231.6C518.2 195.1 526.5 188.6 564.6 161.1" stroke="#2a201b" stroke-width="1.5" opacity="0.58"/>
<path d="M485.9 262.5C525.9 211.0 516.1 177.2 594.6 154.1" stroke="#2f251f" stroke-width="1.5" opacity="0.52"/>
<path d="M488.1 268.0C522.7 235.8 509.6 210.8 556.0 183.9" stroke="#2a201b" stroke-width="1.3" opacity="0.79"/>
<path d="M494.4 241.6C535.3 194.2 548.6 185.6 605.4 145.9" stroke="#2f251f" stroke-width="1.3" opacity="0.61"/>
<path d="M490.6 254.9C538.6 204.6 554.6 196.0 613.2 145.9" stroke="#2a201b" stroke-width="1.5" opacity="0.67"/>
<path d="M512.4 212.8C540.7 179.4 551.8 177.1 591.4 152.0" stroke="#2a201b" stroke-width="0.9" opacity="0.73"/>
<path d="M476.5 273.6C487.9 237.3 482.9 224.5 517.7 199.2" stroke="#1e1613" stroke-width="1.2" opacity="0.55"/>
<path d="M516.1 221.4C540.3 194.9 540.6 182.3 578.9 168.5" stroke="#231a16" stroke-width="1.4" opacity="0.80"/>
<path d="M487.5 273.3C514.7 209.8 527.1 198.6 591.8 158.3" stroke="#1e1613" stroke-width="1.6" opacity="0.67"/>
<path d="M496.6 240.9C516.9 181.9 545.7 194.1 590.6 156.3" stroke="#1e1613" stroke-width="1.1" opacity="0.55"/>
<path d="M511.5 221.2C553.0 198.7 558.5 187.4 597.1 154.9" stroke="#a5917f" stroke-width="1.0" opacity="0.35"/>
<path d="M479.9 280.4C501.0 241.1 504.4 231.1 529.3 192.3" stroke="#76614f" stroke-width="1.5" opacity="0.43"/>
<path d="M488.8 257.5C517.2 219.6 526.5 212.3 560.4 173.1" stroke="#a5917f" stroke-width="1.1" opacity="0.38"/>
<path d="M488.4 275.9C511.9 233.7 509.9 217.4 556.0 186.2" stroke="#9a8674" stroke-width="0.9" opacity="0.45"/>
<path d="M480.2 275.3C483.6 244.0 493.7 241.6 510.7 216.2" stroke="#8f7b6a" stroke-width="1.5" opacity="0.31"/>
<path d="M515.1 211.7C544.8 176.5 550.3 166.0 597.9 150.9" stroke="#76614f" stroke-width="0.9" opacity="0.46"/>
<path d="M478.7 283.1C509.8 237.0 513.8 223.5 551.8 178.7" stroke="#9a8674" stroke-width="1.6" opacity="0.42"/>
<path d="M503.1 220.4C542.6 195.4 552.5 189.9 585.5 151.3" stroke="#9a8674" stroke-width="1.1" opacity="0.47"/>
<path d="M512.7 229.0C550.6 206.3 556.8 197.4 590.5 165.4" stroke="#a5917f" stroke-width="1.3" opacity="0.29"/>
<path d="M497.9 226.6C521.1 208.8 514.5 193.8 542.0 178.8" stroke="#a5917f" stroke-width="1.1" opacity="0.45"/>
<path d="M511.7 231.6C552.7 199.0 553.9 180.0 607.3 155.4" stroke="#7d6a5b" stroke-width="0.9" opacity="0.30"/>
<path d="M497.9 250.0C523.8 218.9 535.8 217.1 561.8 181.5" stroke="#9a8674" stroke-width="1.3" opacity="0.35"/>
<path d="M619.5 149.8C649.3 153.7 657.8 146.1 683.8 162.9" stroke="#231a16" stroke-width="1.2" opacity="0.58"/>
<path d="M623.5 147.3C650.1 142.2 652.9 155.8 677.4 159.0" stroke="#2f251f" stroke-width="1.4" opacity="0.47"/>
<path d="M633.8 151.9C648.2 153.4 651.5 153.5 665.4 157.0" stroke="#1e1613" stroke-width="1.5" opacity="0.50"/>
<path d="M640.8 155.7C656.2 152.8 658.4 158.3 672.5 162.2" stroke="#2a201b" stroke-width="1.7" opacity="0.77"/>
<path d="M614.0 146.6C635.0 145.6 639.9 145.3 660.9 149.8" stroke="#2f251f" stroke-width="1.0" opacity="0.45"/>
<path d="M642.9 152.6C663.8 151.2 666.3 157.1 682.9 166.3" stroke="#1e1613" stroke-width="1.4" opacity="0.53"/>
<path d="M621.1 152.9C644.6 161.7 651.8 151.5 675.1 161.5" stroke="#2a201b" stroke-width="1.6" opacity="0.54"/>
<path d="M607.2 142.0C626.2 138.6 630.5 144.3 649.2 142.4" stroke="#76614f" stroke-width="1.4" opacity="0.41"/>
<path d="M620.1 151.7C639.4 150.7 643.8 150.2 662.2 157.2" stroke="#8f7b6a" stroke-width="1.4" opacity="0.36"/>
<path d="M639.5 146.0C659.1 144.5 661.5 151.9 679.4 156.9" stroke="#a5917f" stroke-width="1.4" opacity="0.27"/>
<path d="M617.0 140.6C633.4 135.2 636.7 144.1 652.3 141.8" stroke="#9a8674" stroke-width="1.4" opacity="0.28"/>
<path d="M607.7 151.0C626.6 150.4 630.8 150.1 649.1 152.3" stroke="#76614f" stroke-width="1.5" opacity="0.28"/>
<path d="M604.3 141.0C620.8 141.6 624.3 134.3 641.6 139.6" stroke="#76614f" stroke-width="1.0" opacity="0.32"/>
<path d="M619.7 142.9C635.2 145.5 638.5 147.0 653.6 145.9" stroke="#a5917f" stroke-width="1.1" opacity="0.29"/>
<path d="M692.3 173.7C703.1 161.9 707.5 164.9 721.7 163.3" stroke="#2f251f" stroke-width="1.5" opacity="0.79"/>
<path d="M690.9 155.6C713.1 151.5 721.5 147.6 759.5 169.9" stroke="#231a16" stroke-width="1.5" opacity="0.63"/>
<path d="M693.1 173.4C703.6 170.0 705.4 167.3 716.9 166.3" stroke="#2a201b" stroke-width="1.3" opacity="0.71"/>
<path d="M705.8 165.4C729.0 163.5 730.9 174.4 757.7 182.6" stroke="#2a201b" stroke-width="1.8" opacity="0.78"/>
<path d="M695.3 158.0C721.9 149.5 726.7 157.2 757.3 170.7" stroke="#1e1613" stroke-width="1.0" opacity="0.76"/>
<path d="M701.7 175.8C720.7 173.4 725.9 163.6 746.0 179.0" stroke="#1e1613" stroke-width="1.4" opacity="0.54"/>
<path d="M697.9 157.4C721.3 148.3 725.7 157.0 753.8 166.4" stroke="#1e1613" stroke-width="1.2" opacity="0.61"/>
<path d="M691.4 173.6C717.5 171.1 727.3 160.4 761.5 187.0" stroke="#2a201b" stroke-width="1.4" opacity="0.76"/>
<path d="M713.2 154.4C725.7 155.9 728.0 159.3 743.1 163.3" stroke="#8a6c58" stroke-width="0.9" opacity="0.38"/>
<path d="M695.5 153.4C720.4 143.9 723.4 157.5 753.4 169.2" stroke="#8a6c58" stroke-width="1.0" opacity="0.52"/>
<path d="M696.9 156.1C706.3 151.9 709.0 153.6 720.8 152.8" stroke="#8f7b6a" stroke-width="1.2" opacity="0.44"/>
<path d="M697.0 172.8C716.4 168.1 720.6 170.8 739.9 172.9" stroke="#7d6a5b" stroke-width="1.3" opacity="0.35"/>
<path d="M690.4 168.5C698.9 155.4 702.7 155.5 719.2 155.7" stroke="#a5917f" stroke-width="1.3" opacity="0.44"/>
<path d="M696.8 170.1C720.9 167.1 727.6 164.7 754.2 176.0" stroke="#7d6a5b" stroke-width="1.1" opacity="0.36"/>
<path d="M707.6 152.0C718.9 148.5 721.0 151.9 732.8 155.9" stroke="#8a6c58" stroke-width="1.6" opacity="0.39"/>
<path d="M695.7 167.1C710.0 158.9 713.5 163.6 729.2 165.6" stroke="#a5917f" stroke-width="1.4" opacity="0.54"/>
</g>
      <path d="M470 300 Q490 296 524 300 L512 330 L506 380 L508 420 L496 420 Q484 360 470 300Z" fill="#94796a" stroke="none" opacity="0.62" filter="url(#b4)"/>
    </g>
    <!-- background peeking through curls -->
    <g fill="#f6ebe4" filter="url(#b1)" opacity="0.85">
      <ellipse cx="748" cy="171.6" rx="6.4" ry="2.6" transform="rotate(12 748 171.6)"/>
      <ellipse cx="751" cy="182.6" rx="4.6" ry="2.6"/>
      <ellipse cx="747.4" cy="192" rx="3" ry="2"/>
      <ellipse cx="758" cy="176" rx="2.4" ry="3"/>
    </g>
    <!-- hair wisps outside outline -->
    <g fill="none" stroke="#4a3a31" stroke-width="1.6" opacity="0.8" stroke-linecap="round" filter="url(#b05)">
      <path d="M499.4 374.5Q495.1 372.9 495.7 367.2"/>
      <path d="M497.3 369.7Q493.3 367.3 493.4 361.9"/>
      <path d="M495.1 364.5Q490.5 361.7 490.7 355.5"/>
      <path d="M493.3 360.3Q488.1 357.3 488.6 350.5"/>
      <path d="M480.7 328.9Q475.7 326.7 477.6 321.7"/>
      <path d="M484.9 340.9Q479.5 338.8 481.5 332.8"/>
      <path d="M477.2 316.2Q472.5 312.8 475.0 307.1"/>
      <path d="M479.0 325.8Q474.5 322.5 476.8 316.6"/>
      <path d="M474.3 297.6Q469.8 296.0 473.6 292.6"/>
      <path d="M474.2 296.0Q469.6 292.2 473.3 286.8"/>
      <path d="M474.9 270.9Q472.2 265.8 475.9 260.5"/>
      <path d="M475.3 267.7Q471.3 264.1 476.0 260.2"/>
      <path d="M481.2 237.5Q478.8 234.3 481.8 231.9"/>
      <path d="M476.7 259.1Q474.2 253.6 478.4 248.5"/>
      <path d="M491.3 217.4Q489.5 213.4 494.4 211.5"/>
      <path d="M487.1 224.0Q485.3 220.0 490.4 217.8"/>
      <path d="M507.9 196.1Q508.0 190.5 514.8 188.5"/>
      <path d="M515.2 188.9Q514.8 182.8 521.9 181.4"/>
      <path d="M533.2 174.4Q532.2 169.7 537.6 170.5"/>
      <path d="M538.1 170.8Q539.5 165.0 546.1 164.2"/>
      <path d="M557.8 161.2Q558.1 156.6 563.4 158.5"/>
      <path d="M554.2 162.7Q555.5 159.2 560.1 159.8"/>
      <path d="M580.7 147.8Q584.0 141.9 589.3 140.9"/>
      <path d="M581.0 147.6Q582.8 142.6 586.8 142.7"/>
      <path d="M589.4 142.0Q592.6 136.5 598.5 138.8"/>
      <path d="M584.8 143.4Q587.9 139.5 592.9 140.4"/>
      <path d="M619.7 135.9Q622.8 131.3 626.7 135.1"/>
      <path d="M624.7 135.7Q628.4 130.8 632.7 134.8"/>
      <path d="M633.1 135.5Q635.8 131.6 638.5 135.0"/>
      <path d="M626.7 135.5Q629.6 132.0 632.8 135.0"/>
      <path d="M660.7 139.8Q664.1 138.2 666.3 141.6"/>
      <path d="M665.6 141.9Q670.1 138.8 672.1 144.1"/>
      <path d="M679.1 149.5Q683.6 148.2 685.4 153.1"/>
      <path d="M674.0 146.1Q679.1 144.9 681.6 150.6"/>
      <path d="M688.4 149.7Q694.3 143.6 696.4 145.2"/>
      <path d="M688.1 149.8Q693.3 144.4 695.0 145.9"/>
      <path d="M699.2 143.9Q704.9 139.5 706.2 142.7"/>
      <path d="M702.4 143.5Q707.9 140.7 710.9 142.1"/>
      <path d="M714.9 142.7Q720.5 141.7 723.3 144.6"/>
      <path d="M717.5 143.5Q723.4 142.4 726.2 145.5"/>
      <path d="M734.4 150.9Q740.4 150.1 741.2 154.7"/>
      <path d="M729.1 147.5Q735.8 146.9 737.2 152.1"/>
      <path d="M741.9 156.1Q747.2 154.4 747.1 158.0"/>
      <path d="M757.2 163.2Q763.1 162.4 763.5 165.7"/>
      <path d="M763.1 167.1Q768.3 167.6 768.4 171.8"/>
      <path d="M760.7 164.8Q766.4 165.1 766.2 169.6"/>
      <path d="M771.3 177.3Q776.7 178.3 775.3 183.3"/>
      <path d="M767.0 169.8Q772.6 171.2 771.6 176.9"/>
      <path d="M784.2 201.4Q789.1 202.9 786.5 207.2"/>
      <path d="M783.7 200.0Q788.0 201.7 786.0 205.7"/>
      <path d="M791.8 230.2Q795.6 232.3 793.3 235.6"/>
      <path d="M789.9 220.4Q794.4 224.6 792.3 230.1"/>
      <path d="M794.9 254.0Q798.6 256.9 796.0 260.0"/>
      <path d="M794.3 247.6Q798.4 252.6 795.8 257.8"/>
      <path d="M795.3 262.1Q798.8 265.0 795.3 267.8"/>
      <path d="M795.6 259.3Q799.5 264.3 795.2 269.1"/>
      <path d="M793.4 282.2Q797.0 286.2 792.6 288.9"/>
      <path d="M791.9 290.0Q794.3 295.6 790.5 299.8"/>
      <path d="M789.7 301.5Q792.8 305.9 788.2 308.1"/>
      <path d="M788.9 304.2Q791.2 308.7 787.2 311.1"/>
      <path d="M782.0 327.5Q785.3 333.1 780.9 335.0"/>
      <path d="M783.0 323.2Q786.6 327.5 782.4 328.3"/>
      <path d="M776.5 352.8Q778.2 360.1 774.4 363.7"/>
      <path d="M776.2 354.1Q777.5 361.1 774.2 364.7"/>
    </g>
    <g fill="none" stroke="#54423a" stroke-width="1.2" opacity="0.75" filter="url(#b05)">
      <path d="M676 148 Q684 138 696 140 Q706 142 712 150"/>
      <path d="M690 152 Q700 136 716 138 Q730 142 738 156"/>
      <path d="M730 146 Q746 150 756 166 Q764 178 762 192"/>
      <path d="M742 160 Q752 170 754 186"/>
      <path d="M650 134 Q662 130 674 138"/>
      <path d="M700 146 Q712 132 730 140 Q744 148 750 160"/>
      <path d="M716 150 Q730 138 748 150 Q760 160 764 176"/>
      <path d="M682 146 Q692 134 706 136"/>
      <path d="M736 152 Q750 156 760 172"/>
      <path d="M660 136 Q672 128 686 136 Q694 142 696 150"/>
    </g>
    <!-- hairline shadow on forehead -->
    <g clip-path="url(#faceClip)">
      <path d="M523 298 Q565 296 607 292 Q628 286 648 270 Q673 256 698 248 Q723 246 744 256" fill="none" stroke="#8a5a42" stroke-width="9" opacity="0.6" filter="url(#b4)"/>
    </g>
  </svg>

  <!-- layers panel etc -->
  <!-- ===== menu: Ps logo ===== -->
  <div class="a" style="left:357.6px;top:3.6px;width:11.6px;height:10.8px;background:#0a1e33;border-radius:2.6px;box-shadow:inset 0 0 0 1.1px #3687b0;"></div>
  <div class="t" style="left:359.9px;top:9.3px;font-size:6.6px;font-weight:700;color:#c9ecff;letter-spacing:-0.5px;">Ps</div>

  <!-- ===== options bar widgets ===== -->
  <svg class="a" style="left:352px;top:19px;" width="420" height="23" viewBox="352 19 420 23">
    <!-- grip -->
    <rect x="358.2" y="23" width="0.8" height="15" fill="#474747"/>
    <!-- home -->
    <path d="M373.5 25 L379.6 30.6 L378 30.6 L378 35.6 L375.1 35.6 L375.1 32.2 L372 32.2 L372 35.6 L369 35.6 L369 30.6 L367.4 30.6 Z" fill="#b4b4b4"/>
    <rect x="389.7" y="23" width="0.8" height="15" fill="#444"/>
    <!-- transform tool glyph -->
    <path d="M395.8 26 L400.2 29.6 L395.8 33.2 Z" fill="#9a9a9a"/>
    <path d="M399 25.4h8.6v9h-8.6" fill="none" stroke="#8e8e8e" stroke-width="1.1" stroke-dasharray="1.6 1.6"/>
    <!-- checkbox -->
    <rect x="429.2" y="25.4" width="8.8" height="8.8" rx="1.3" fill="#ececec"/>
    <path d="M431.2 29.8 L433 31.8 L436.4 27.6" fill="none" stroke="#3a3a3a" stroke-width="1.5"/>
    <!-- reference point locator -->
    <rect x="444.4" y="24.6" width="10.8" height="10.8" fill="none" stroke="#888" stroke-width="1" stroke-dasharray="1.6 1.5"/>
    <rect x="448.2" y="28.4" width="3.2" height="3.2" fill="#f0f0f0"/>
    <!-- delta triangle -->
    <path d="M515.2 26.4 L518.9 33.6 L511.5 33.6 Z" fill="none" stroke="#cfcfcf" stroke-width="1.3" stroke-linejoin="round"/>
    <!-- chain link -->
    <g fill="none" stroke="#cfcfcf" stroke-width="1.25"><rect x="627.6" y="28.1" width="5" height="4" rx="2"/><rect x="631" y="28.1" width="5" height="4" rx="2"/></g>
    <!-- angle -->
    <path d="M699.6 33.6 L691 33.6 L697.4 26.6" fill="none" stroke="#cfcfcf" stroke-width="1.2"/>
    <path d="M695.2 33.4 A4 4 0 0 0 694 30.3" fill="none" stroke="#cfcfcf" stroke-width="1"/>
    <rect x="743" y="24" width="0.8" height="13" fill="#444"/>
  </svg>
  <div class="inp" style="left:471px;top:25px;width:32px;height:10.6px;"><span>1695.50 px</span></div>
  <div class="inp" style="left:538px;top:25px;width:32px;height:10.6px;"><span>2205.50 px</span></div>
  <div class="inp" style="left:589.4px;top:25px;width:29.6px;height:10.6px;"><span style="left:3.8px">116.35%</span></div>
  <div class="inp" style="left:654px;top:25px;width:29px;height:10.6px;"><span style="left:3.2px">116.35%</span></div>
  <div class="inp" style="left:702.2px;top:25px;width:28.4px;height:10.6px;"><span>0.00</span></div>
  <div class="inp" style="left:760.2px;top:25px;width:20px;height:10.6px;"><span style="left:2.4px">0.00</span></div>

  <!-- tab close glyphs + collapse chevrons -->
  <svg class="a" style="left:352px;top:42px;" width="420" height="20" viewBox="352 42 420 20">
    <path d="M569.8 48.6 l5 5 M574.8 48.6 l-5 5" stroke="#a8a8a8" stroke-width="0.9" fill="none"/>
    <path d="M766 48.6 l4.6 4.8 M770.6 48.6 l-4.6 4.8" stroke="#bdbdbd" stroke-width="0.9" fill="none"/>
    <path d="M358.2 44.2 l1.7 1.7 l-1.7 1.7 M360.8 44.2 l1.7 1.7 l-1.7 1.7" stroke="#d8d8d8" stroke-width="0.9" fill="none"/>
  </svg>

  <!-- ===== LAYERS PANEL ===== -->
  <div class="a" style="left:771.4px;top:0;width:156.6px;height:196px;background:#333;"></div>
  <div class="a" style="left:772.4px;top:0;width:155.6px;height:195px;background:#3d3d3d;"></div>
  <div class="a" style="left:772.4px;top:0;width:155.6px;height:9.4px;background:#454545;"></div>
  <div class="a" style="left:772.4px;top:9.4px;width:155.6px;height:18.4px;background:#434343;"></div>
  <div class="a" style="left:772.4px;top:9.4px;width:30.8px;height:18.6px;background:#515151;"></div>
  <div class="a" style="left:803.6px;top:9.8px;width:30px;height:17.6px;background:#484848;"></div>
  <!-- panel body -->
  <div class="a" style="left:772.4px;top:27.9px;width:155.6px;height:146px;background:#4f4f4f;"></div>
  <div class="a" style="left:772.4px;top:49.2px;width:155.6px;height:0.9px;background:#454545;"></div>
  <div class="a" style="left:772.4px;top:67.2px;width:155.6px;height:0.9px;background:#464646;"></div>
  <!-- kind search -->
  <div class="a" style="left:775.8px;top:34.2px;width:58px;height:12.4px;background:#494949;box-shadow:0 0 0 0.6px #444;"></div>
  <!-- blend dropdown -->
  <div class="a" style="left:775.2px;top:52.8px;width:84.8px;height:12px;background:#444;border-radius:1px;"></div>
  <!-- opacity & fill fields -->
  <div class="a" style="left:891.8px;top:52.8px;width:22.6px;height:12px;background:#454545;"></div>
  <div class="a" style="left:915.8px;top:52.8px;width:9.4px;height:12px;background:#494949;"></div>
  <div class="a" style="left:891.8px;top:71px;width:22.6px;height:12px;background:#454545;"></div>
  <div class="a" style="left:915.8px;top:71px;width:9.4px;height:12px;background:#494949;"></div>
  <!-- layer rows -->
  <div class="a" style="left:772.4px;top:87.6px;width:145.2px;height:27.2px;background:#505050;"></div>
  <div class="a" style="left:791.8px;top:87.6px;width:125.8px;height:27.2px;background:#686868;"></div>
  <div class="a" style="left:772.4px;top:115.6px;width:145.2px;height:27px;background:#505050;"></div>
  <div class="a" style="left:772.4px;top:114.8px;width:145.2px;height:0.9px;background:#464646;"></div>
  <div class="a" style="left:791.3px;top:87.6px;width:0.8px;height:55px;background:#474747;"></div>
  <div class="a" style="left:772.4px;top:142.6px;width:155.6px;height:31.6px;background:#4a4a4a;"></div>
  <div class="a" style="left:917.6px;top:87.6px;width:10.4px;height:86.6px;background:#4b4b4b;"></div>
  <!-- footer -->
  <div class="a" style="left:772.4px;top:173.8px;width:155.6px;height:1px;background:#3c3c3c;"></div>
  <div class="a" style="left:772.4px;top:174.8px;width:155.6px;height:15.6px;background:#4d4d4d;"></div>
  <div class="a" style="left:772.4px;top:190.4px;width:155.6px;height:4.6px;background:#434343;"></div>
  <!-- layer thumbs -->
  <div class="a" style="left:795.2px;top:119.8px;width:16.6px;height:20.4px;background:#f7efe9;"></div>
  <svg class="a" style="left:771px;top:0;" width="158" height="196" viewBox="771 0 158 196">
    <defs>
      <pattern id="chk" x="797" y="91" width="4" height="4" patternUnits="userSpaceOnUse"><rect width="4" height="4" fill="#fff"/><rect width="2" height="2" fill="#e2e2e2"/><rect x="2" y="2" width="2" height="2" fill="#e2e2e2"/></pattern>
      <radialGradient id="tf" cx="0.5" cy="0.45" r="0.6"><stop offset="0" stop-color="#eac7b2"/><stop offset="1" stop-color="#d7ab92"/></radialGradient>
    </defs>
    <!-- panel top-right glyphs -->
    <path d="M910.6 3.4 l-1.8 1.7 l1.8 1.7 M913.4 3.4 l-1.8 1.7 l1.8 1.7" stroke="#d5d5d5" stroke-width="1" fill="none"/>
    <path d="M921.4 3.2 l3.8 3.8 M925.2 3.2 l-3.8 3.8" stroke="#dcdcdc" stroke-width="1.1" fill="none"/>
    <path d="M918.6 16.6h7 M918.6 18.5h7 M918.6 20.4h7" stroke="#c8c8c8" stroke-width="1.1"/>
    <!-- search magnifier & chevron -->
    <circle cx="782.4" cy="39.6" r="2.3" fill="none" stroke="#c4c4c4" stroke-width="1.1"/>
    <path d="M784 41.4 l2.4 2.5" stroke="#c4c4c4" stroke-width="1.3"/>
    <path d="M826 39.6 l1.8 1.8 l1.8 -1.8" stroke="#5a5a5a" stroke-width="0.9" fill="none"/>
    <!-- filter icons -->
    <g fill="none" stroke="#bcbcbc" stroke-width="1.1">
      <rect x="840.2" y="37" width="8" height="6.8" rx="0.8"/>
      <circle cx="860.5" cy="40.4" r="3.6"/>
      <path d="M888.6 37.4h7.4v6h-7.4z M887.6 36.4h2v2h-2z M895 36.4h2v2h-2z M887.6 42.4h2v2h-2z M895 42.4h2v2h-2z"/>
      <path d="M905 44.2v-5.6l3.2-2.4l3.6 2.6v5.4z"/>
    </g>
    <path d="M841.6 42.6 l2-2.6 l1.4 1.6 l1-1 l1.4 2z" fill="#bcbcbc"/>
    <path d="M860.5 36.8 a3.6 3.6 0 0 1 0 7.2 z" fill="#bcbcbc" transform="rotate(45 860.5 40.4)"/>
    <path d="M872.6 36.8h7.4v1.8h-0.8l-0.4-0.8h-1.8v5.6l1 0.3v0.6h-3.4v-0.6l1-0.3v-5.6h-1.8l-0.4 0.8h-0.8z" fill="#c4c4c4"/>
    <rect x="906.6" y="40.2" width="3.2" height="4" fill="#bcbcbc"/>
    <circle cx="923" cy="36.6" r="2.6" fill="#707070"/><rect x="922.4" y="38.6" width="1.2" height="3.6" fill="#5c5c5c"/>
    <!-- dropdown chevrons -->
    <g fill="none" stroke="#d8d8d8" stroke-width="1.1">
      <path d="M853.8 57.6 l2.4 2.4 l2.4 -2.4"/>
      <path d="M918.2 57.8 l2.3 2.3 l2.3 -2.3"/>
      <path d="M918.2 76 l2.3 2.3 l2.3 -2.3"/>
    </g>
    <!-- lock row icons -->
    <g fill="none" stroke="#8a8a8a" stroke-width="1">
      <rect x="798.4" y="73.4" width="7" height="7"/>
      <path d="M801.9 73.4v7 M798.4 76.9h7"/>
      <path d="M819.6 72.6 l-4.6 5.4"/>
      <path d="M831.4 72.6v8.4 M827.2 76.8h8.4"/>
      <path d="M843.6 72.2v7.4h7.6 M841.6 74.4h7.6v7"/>
    </g>
    <rect x="798.6" y="73.6" width="3.2" height="3.2" fill="#6e6e6e"/><rect x="802" y="77" width="3.2" height="3.2" fill="#6e6e6e"/>
    <path d="M815.2 77.6 l-2 3.4 l3.2 -2z" fill="#8a8a8a"/>
    <path d="M831.4 71.4 l1.6 2h-3.2z M831.4 82.2 l1.6 -2h-3.2z M826 76.8 l2 -1.6v3.2z M836.8 76.8 l-2 -1.6v3.2z" fill="#8a8a8a"/>
    <rect x="857.4" y="76.2" width="6.6" height="5" rx="0.6" fill="#8a8a8a"/>
    <path d="M858.8 76.2v-1.6a1.9 1.9 0 0 1 3.8 0v1.6" fill="none" stroke="#8a8a8a" stroke-width="1.1"/>
    <!-- eyes -->
    <g>
      <path d="M778 102.6 Q782.5 97.6 787 102.6 Q782.5 107.6 778 102.6z" fill="#e9e9e9"/>
      <circle cx="782.5" cy="102.6" r="1.9" fill="#505050"/>
      <path d="M778 130.8 Q782.5 125.8 787 130.8 Q782.5 135.8 778 130.8z" fill="#e9e9e9"/>
      <circle cx="782.5" cy="130.8" r="1.9" fill="#505050"/>
    </g>
    <!-- layer 1 thumbnail -->
    <rect x="794.2" y="89.8" width="19.2" height="23.8" fill="none" stroke="#8c8c8c" stroke-width="0.9"/>
    <rect x="796.2" y="91" width="15.4" height="21.6" fill="url(#chk)"/>
    <path d="M799.6 100 Q799.2 95.4 803.6 94.4 Q808.4 94.6 808.6 99.6 L808.4 103.4 Q807.4 110 804 110.6 Q800.6 109.8 799.8 103.6z" fill="url(#tf)"/>
    <path d="M799.2 100.6 Q798.4 94.2 803.4 92.8 Q809 93 809 100 Q808.2 96.8 806 96.6 Q802 97.8 800.2 97 z" fill="#4a372c"/>
    <ellipse cx="804.2" cy="106.6" rx="1.1" ry="1.3" fill="#6b3024"/>
    <circle cx="802.2" cy="100.4" r="0.7" fill="#5a4a48"/><circle cx="806.2" cy="100.2" r="0.7" fill="#5a4038"/>
    <path d="M794 93.6v-3.8h3.6 M810 89.8h3.6v3.8 M813.6 109.8v3.8h-3.6 M797.6 113.6h-3.6v-3.8" fill="none" stroke="#f2f2f2" stroke-width="1.1"/>
    <!-- bg layer lock -->
    <rect x="900.4" y="129.8" width="7.2" height="5.2" rx="0.7" fill="none" stroke="#e0e0e0" stroke-width="1.1"/>
    <path d="M901.9 129.6v-1.2a2.1 2.1 0 0 1 4.2 0v1.2" fill="none" stroke="#e0e0e0" stroke-width="1.1"/>
    <rect x="903.4" y="131.6" width="1.4" height="1.8" fill="#e0e0e0"/>
    <!-- footer icons -->
    <g transform="translate(0 -0.9)"><g fill="none" stroke="#8d8d8d" stroke-width="1.15">
      <rect x="794" y="180.2" width="5.6" height="4" rx="2"/><rect x="798.2" y="180.2" width="5.6" height="4" rx="2"/>
      <circle cx="853.2" cy="182.2" r="3.7"/>
      <rect x="885" y="178.4" width="7.8" height="7.6" rx="0.6"/>
      <path d="M903.4 180.4h6l-0.5 6h-5z M902.4 180.2h8 M905.2 180v-1.4h2.4v1.4"/>
    </g>
    <rect x="830" y="178.6" width="9" height="7.2" rx="0.8" fill="#8d8d8d"/><circle cx="834.5" cy="182.2" r="2.1" fill="#4d4d4d"/>
    <path d="M853.2 178.5 a3.7 3.7 0 0 1 0 7.4z" fill="#8d8d8d" transform="rotate(45 853.2 182.2)"/>
    <path d="M866.2 179.4h3.4l1 1.2h4.8v5.4h-9.2z" fill="#8d8d8d"/>
    <path d="M888.9 180.2v4 M886.9 182.2h4" stroke="#8d8d8d" stroke-width="1.2"/>
    <text x="812.6" y="185.8" font-family="Liberation Serif, serif" font-style="italic" font-size="10.5" fill="#8d8d8d" letter-spacing="-0.6">fx</text></g>
  </svg>
  <!-- ===== LEFT TOOLBAR ICONS ===== -->
  <svg class="a" style="left:352px;top:60px;" width="30" height="460" viewBox="352 60 30 460">
    <g fill="none" stroke="#d2d2d2" stroke-width="1.2" stroke-linecap="round" stroke-linejoin="round">
      <!-- move -->
      <path d="M367.6 65.6v9 M363.1 70.1h9" stroke-width="1.5"/>
      <!-- elliptical marquee -->
      <ellipse cx="367.8" cy="86.4" rx="5.3" ry="5" stroke-dasharray="1.8 1.5"/>
      <!-- lasso -->
      <path d="M364.4 106.6 Q361.2 103 365.4 100.6 Q371.8 98.6 373.2 102.2 Q373.4 105.8 367.6 106.4 Q364.6 106.6 364.4 108.6 Q365 110 366.4 109.4"/>
      <!-- quick select -->
      <path d="M366.4 118.2 Q362 118.6 362.4 122.6 Q363.6 125.6 366.6 124.2" stroke-dasharray="1.6 1.3"/>
      <path d="M373 116.6 L367.6 122.8" stroke-width="1.8"/>
      <!-- crop -->
      <path d="M365 133.2v8.4h8.6 M362.4 135.8h8.4v8.4" stroke-width="1.5" stroke-linecap="butt"/>
      <!-- frame -->
      <rect x="362.6" y="151.2" width="10" height="9.2"/>
      <path d="M362.6 151.2l10 9.2 M372.6 151.2l-10 9.2" stroke-width="1"/>
      <!-- eyedropper -->
      <path d="M363.2 178.4 L369.2 171.6" stroke-width="1.7"/>
      <path d="M368.2 170.4 l3.2 3" stroke-width="1.4"/>
      <!-- brush -->
      <path d="M373 203 L367.2 210" stroke-width="2.2"/>
      <!-- history brush -->
      <path d="M372.6 238.4 L367 245" stroke-width="1.6"/>
      <path d="M362.6 240.4 a3.4 3.4 0 0 1 5.4 -2.6" stroke-width="1"/>
      <!-- pen -->
      <path d="M363 334 L365.2 327.4 L370.4 324.6 L373 327.2 L370.2 332.4 Z"/>
      <path d="M363 334 L367.6 329.4" stroke-width="0.9"/>
      <!-- rectangle -->
      <rect x="362.8" y="377.2" width="10.6" height="8" stroke-width="1.2" fill="#6c6c6c"/>
      <!-- zoom -->
      <circle cx="366.6" cy="414.6" r="3.6" stroke-width="1.4"/>
      <path d="M369.4 417.4 l3.6 3.6" stroke-width="1.8"/>
      <!-- quick mask -->
      <rect x="362.2" y="483.8" width="10.8" height="8.6" rx="0.8" stroke-width="1.1"/>
      <circle cx="367.6" cy="488.1" r="2.5" stroke-width="1.1" stroke-dasharray="1.2 1"/>
      <!-- screen mode -->
      <rect x="365.2" y="500.6" width="8.2" height="6" stroke-width="1.1"/>
      <path d="M364.6 503.4h-2.4v6h8.2v-2" stroke-width="1.1"/>
      <!-- swap arrows -->
      <path d="M371.2 447.6 h2.4 q1.2 0 1.2 1.2 v2.4" stroke-width="1"/>
    </g>
    <g fill="#d2d2d2">
      <!-- move arrowheads -->
      <path d="M367.6 64.2l2.2 2.6h-4.4z M367.6 76l2.2 -2.6h-4.4z M361.7 70.1l2.6 -2.2v4.4z M373.5 70.1l-2.6 -2.2v4.4z"/>
      <!-- brush tip -->
      <path d="M366.8 209.6 q-3 0.6 -4 3.8 q3.4 0.2 5.2 -2.6z"/>
      <path d="M367.2 244.4 q-2.6 0.6 -3.6 3.4 q3 0.2 4.8 -2.2z"/>
      <path d="M373.2 169.6 a1.8 1.8 0 0 1 0 2.8l-1.4 1.4l-2.6 -2.6l1.4 -1.4a1.8 1.8 0 0 1 2.6 -0.2z"/>
      <!-- healing band-aid -->
      <path d="M362.2 192.4 l6.4 -6.4 a2.6 2.6 0 0 1 3.8 3.8 l-6.4 6.4 a2.6 2.6 0 0 1 -3.8 -3.8z"/>
      <!-- stamp -->
      <path d="M365.4 221.2 a2.4 2.4 0 1 1 4.6 0 l-0.8 3.4 h3.6 v3 h-10.2 v-3 h3.6z M362.6 229h10.2v1.4h-10.2z"/>
      <!-- eraser -->
      <path d="M362.4 262 l5.6 -6.6 l4.8 3.6 l-5.6 6.6 h-2.6z"/>
      <!-- blur drop -->
      <path d="M367.4 289.2 q4 5 4 7.4 a4 4 0 0 1 -8 0 q0 -2.4 4 -7.4z"/>
      <!-- dodge -->
      <path d="M362 311.6 a4.4 3.4 0 1 1 8 1.8 l3.6 1 l-0.6 2 l-4.6 -1.2 a4.4 3.4 0 0 1 -6.4 -3.6z"/>
      <!-- T -->
      <path d="M364 342h9.6v2.8h-0.9l-0.5 -1.4h-2.4v7.6l1.4 0.4v0.8h-4.8v-0.8l1.4 -0.4v-7.6h-2.4l-0.5 1.4h-0.9z"/>
      <!-- path select arrow -->
      <path d="M365.2 358.4 L365.2 369 L367.8 366.6 L369.6 370.6 L371 370 L369.2 366 L372.8 366z" fill="#1d1d1d" stroke="#d8d8d8" stroke-width="0.9" stroke-linejoin="round"/>
      <!-- hand -->
      <path d="M363.6 398.6 q-1.6 -2.4 -0.4 -3 q1 -0.2 2 1.4 v-5.2 q0.6 -1 1.4 0 v-1.4 q0.8 -1 1.6 0 v1 q0.8 -1 1.6 0 v1.2 q0.8 -0.8 1.6 0.2 v6 q0 4 -3.2 4.4 h-2 q-1.6 -0.6 -2.6 -4.6z"/>
      <path d="M366.6 392.2v4.4 M368.2 391.4v5 M369.8 392.4v4.4" stroke="#535353" stroke-width="0.5" fill="none"/>
      <!-- dots -->
      <circle cx="363.8" cy="433.5" r="1.3"/><circle cx="368" cy="433.5" r="1.3"/><circle cx="372.2" cy="433.5" r="1.3"/>
      <!-- default colors mini -->
      <rect x="360.6" y="448" width="4.6" height="4.6"/>
      <path d="M371.4 446l-1.9 1.6l1.9 1.6z M373.2 450.8l1.6 1.9l1.6 -1.9z"/>
      <!-- flyout corner ticks -->
      <g fill="#bdbdbd">
        <path d="M375.4 76l1.6 0v-1.6z M375.4 93.4l1.6 0v-1.6z M375.4 110.8l1.6 0v-1.6z M375.4 128l1.6 0v-1.6z M375.4 145.4l1.6 0v-1.6z M375.4 180l1.6 0v-1.6z M375.4 197.4l1.6 0v-1.6z M375.4 214.6l1.6 0v-1.6z M375.4 232l1.6 0v-1.6z M375.4 249.4l1.6 0v-1.6z M375.4 266.6l1.6 0v-1.6z M375.4 284l1.6 0v-1.6z M375.4 301.4l1.6 0v-1.6z M375.4 318.6l1.6 0v-1.6z M375.4 336l1.6 0v-1.6z M375.4 353.2l1.6 0v-1.6z M375.4 370.6l1.6 0v-1.6z M375.4 388l1.6 0v-1.6z M375.4 405.2l1.6 0v-1.6z M375.4 439.6l1.6 0v-1.6z M375.4 511.4l1.6 0v-1.6z"/>
      </g>
    </g>
    <!-- healing dots -->
    <g fill="#535353"><circle cx="366.4" cy="190" r="0.6"/><circle cx="368.4" cy="192" r="0.6"/><circle cx="368.4" cy="190" r="0.6"/><circle cx="366.4" cy="192" r="0.6"/></g>
    <!-- dodge hole -->
    <ellipse cx="365.6" cy="311.4" rx="1.5" ry="1.1" fill="#535353"/>
    <rect x="366" y="448.2" width="0" height="0"/>
    <rect x="358.6" y="446" width="4.4" height="4.4" fill="#111" stroke="#e2e2e2" stroke-width="0.8"/>
    <!-- gradient -->
    <defs><linearGradient id="tg" x1="0" y1="0" x2="1" y2="0"><stop offset="0" stop-color="#f0f0f0"/><stop offset="1" stop-color="#4a4a4a"/></linearGradient></defs>
    <rect x="362.4" y="273" width="10.6" height="8.6" fill="url(#tg)" stroke="#d2d2d2" stroke-width="1"/>
    <!-- fg/bg swatches -->
    <rect x="364.8" y="463.2" width="12.4" height="12" fill="#f3ece6" stroke="#3a3a3a" stroke-width="0.6"/>
    <rect x="357.9" y="456.9" width="12.2" height="11.8" fill="#ffffff" stroke="#3a3a3a" stroke-width="0.6"/>
  </svg>

  <!-- ===== status bar chevron ===== -->
  <svg class="a" style="left:525px;top:704px;" width="14" height="14" viewBox="525 704 14 14"><path d="M529.8 707.8 l2.6 3.4 l-2.6 3.4" fill="none" stroke="#cfcfcf" stroke-width="0.9"/></svg>
  <div class="a" style="left:414.6px;top:706.6px;width:0.8px;height:9px;background:#444;"></div>

  <!-- ===== transform box ===== -->
  <svg class="a" style="left:406px;top:81px;" width="366" height="606" viewBox="406 81 366 606">
    <g fill="none" stroke="#9fa6cf" stroke-width="1">
      <path d="M463.5 123.5H772"/>
    </g>
  </svg>
  <svg class="a" id="tbox" style="left:406px;top:81px;" width="486" height="606" viewBox="406 81 486 606">
    <path d="M463.5 123.5V630.3H805.2V195" fill="none" stroke="#a2a8d2" stroke-width="1.1"/>
    <g fill="#fbf6f6" stroke="#9195bb" stroke-width="0.9">
      <rect x="460.7" y="120.7" width="5.8" height="5.8"/>
      <rect x="631.5" y="120.7" width="5.8" height="5.8"/>
      <rect x="460.7" y="374.1" width="5.8" height="5.8"/>
      <rect x="802.3" y="374.1" width="5.8" height="5.8"/>
      <rect x="460.7" y="627.4" width="5.8" height="5.8"/>
      <rect x="631.5" y="627.4" width="5.8" height="5.8"/>
      <rect x="802.3" y="627.4" width="5.8" height="5.8"/>
    </g>
    <!-- centre reference point -->
    <g fill="none" stroke="#35241f" stroke-width="1.25">
      <circle cx="635.1" cy="377.8" r="3.7"/>
      <path d="M635.1 370v4.4 M635.1 381.2v4.4 M627.3 377.8h4.4 M638.5 377.8h4.4"/>
    </g>
    <circle cx="635.1" cy="377.8" r="0.8" fill="#4a342c"/>
    <!-- tooltip -->
    <rect x="675.8" y="371" width="41" height="20.4" rx="2" fill="#2b2b2b" opacity="0.93"/>
    <g fill="none" stroke="#f2f2f2" stroke-width="0.9">
      <path d="M680.8 374.4v6 M686.6 377.4h-4.4 M684 375.8l-1.8 1.6l1.8 1.6"/>
      <path d="M680.6 388.6h5 M683.1 382.4v4.6 M681.5 385.4l1.6 1.6l1.6 -1.6"/>
    </g>
    <g fill="#f2f2f2"><rect x="688.6" y="376" width="1" height="1"/><rect x="688.6" y="379" width="1" height="1"/><rect x="688.6" y="384.2" width="1" height="1"/><rect x="688.6" y="387.2" width="1" height="1"/></g>
    <!-- mouse cursor -->
    <path d="M664.4 400.3 L664.4 411 L666.9 408.4 L669.2 408.4 L671.8 408.2 Z" fill="#0b0b0b" stroke="#f3d6c2" stroke-width="0.7" stroke-linejoin="round"/>
  </svg>

  <!-- ===== key overlay box ===== -->
  <div class="a" style="left:353.6px;top:659.5px;width:121.4px;height:32px;background:#14120e;"></div>
  <div class="a" style="left:361.4px;top:659.5px;width:10.5px;height:4.7px;background:#25cf3a;"></div>

  <!-- ===== watermark ===== -->
  <svg class="a" style="left:785px;top:660px;" width="132" height="48" viewBox="785 660 132 48">
    <g fill="#ffffff" opacity="0.74">
      <path d="M789.8 701.9 Q800 695 808 694.6 Q816 694.6 826 699.6 Q836 704 843 699.6 Q848 695.6 849 688 L851.6 688 Q851.6 697 846 701.6 Q838 706.8 826 702.4 Q815 697.6 808 697.6 Q803 697.8 800 701.9 Z"/>
      <path d="M911.2 701.9 Q901 695 893 694.6 Q885 694.6 875 699.6 Q865 704 858 699.6 Q853 695.6 852 688 L849.4 688 Q849.4 697 855 701.6 Q863 706.8 875 702.4 Q886 697.6 893 697.6 Q898 697.8 901 701.9 Z"/>
      <path d="M847.6 672 L853.2 672 L853 690 L848 690 Z"/>
      <path d="M829 678 Q831 676.6 833.4 677.6 Q834.4 690 843.6 692.6 Q846 692.4 847.4 690.6 L848 692.4 Q845 695.6 841.6 694.6 Q831.6 691 829 678Z"/>
      <path d="M852.4 688 Q856 679 868 677.4 Q872.6 677 874.6 679 Q866 679.4 861 684 Q856.6 688 854 692Z"/>
      <path d="M847.6 672 L846.8 667.6 L848.8 669.4 L850.5 666.4 L852.2 669.4 L854.2 667.6 L853.4 672Z"/>
    </g>
  </svg>

<div class="t" style="left:377.75px;top:9.98px;font-size:9px;font-weight:400;color:#e4e4e4;transform:scaleX(0.8439);">File</div>
<div class="t" style="left:398.00px;top:9.98px;font-size:9px;font-weight:400;color:#e4e4e4;transform:scaleX(0.8701);">Edit</div>
<div class="t" style="left:419.50px;top:9.98px;font-size:9px;font-weight:400;color:#e4e4e4;transform:scaleX(0.8595);">Image</div>
<div class="t" style="left:449.50px;top:9.98px;font-size:9px;font-weight:400;color:#e4e4e4;transform:scaleX(0.7994);">Layer</div>
<div class="t" style="left:476.00px;top:9.98px;font-size:9px;font-weight:400;color:#e4e4e4;transform:scaleX(0.8199);">Type</div>
<div class="t" style="left:500.60px;top:9.98px;font-size:9px;font-weight:400;color:#e4e4e4;transform:scaleX(0.8555);">Select</div>
<div class="t" style="left:529.50px;top:9.98px;font-size:9px;font-weight:400;color:#e4e4e4;transform:scaleX(0.8500);">Filter</div>
<div class="t" style="left:555.00px;top:9.98px;font-size:9px;font-weight:400;color:#e4e4e4;transform:scaleX(0.8250);">3D</div>
<div class="t" style="left:573.00px;top:9.98px;font-size:9px;font-weight:400;color:#e4e4e4;transform:scaleX(0.8523);">View</div>
<div class="t" style="left:597.50px;top:9.98px;font-size:9px;font-weight:400;color:#e4e4e4;transform:scaleX(0.9058);">Window</div>
<div class="t" style="left:635.00px;top:9.98px;font-size:9px;font-weight:400;color:#e4e4e4;transform:scaleX(0.8641);">Help</div>
<div class="t" style="left:462.00px;top:30.05px;font-size:8.5px;font-weight:400;color:#cfcfcf;transform:scaleX(0.7471);">X:</div>
<div class="t" style="left:528.00px;top:30.05px;font-size:8.5px;font-weight:400;color:#cfcfcf;transform:scaleX(0.7934);">Y:</div>
<div class="t" style="left:578.00px;top:30.05px;font-size:8.5px;font-weight:400;color:#cfcfcf;transform:scaleX(0.7817);">W:</div>
<div class="t" style="left:644.00px;top:30.05px;font-size:8.5px;font-weight:400;color:#cfcfcf;transform:scaleX(0.7647);">H:</div>
<div class="t" style="left:749.00px;top:30.05px;font-size:8.5px;font-weight:400;color:#cfcfcf;transform:scaleX(0.8235);">H:</div>
<div class="t" style="left:734.00px;top:29.88px;font-size:9px;font-weight:400;color:#cfcfcf;transform:scaleX(0.8312);">°</div>
<div class="t" style="left:386.40px;top:710.83px;font-size:8px;font-weight:400;color:#dcdcdc;transform:scaleX(0.8235);">20.17%</div>
<div class="t" style="left:422.00px;top:710.83px;font-size:8px;font-weight:400;color:#d0d0d0;transform:scaleX(0.8237);">3600 px x 4500 px (118.11 ppcm)</div>
<div class="t" style="left:365.30px;top:675.42px;font-size:19px;font-weight:700;color:#ffffff;transform:scaleX(0.9719);">Alt + Shift</div>
<div class="t" style="left:777.70px;top:17.25px;font-size:8.5px;font-weight:700;color:#f0f0f0;transform:scaleX(0.7403);">Layers</div>
<div class="t" style="left:809.40px;top:17.25px;font-size:8.5px;font-weight:400;color:#b4b4b4;transform:scaleX(0.7862);">Paths</div>
<div class="t" style="left:789.00px;top:40.05px;font-size:8.5px;font-weight:400;color:#7c7c7c;transform:scaleX(0.7640);">Kind</div>
<div class="t" style="left:780.00px;top:58.65px;font-size:8.5px;font-weight:400;color:#ececec;transform:scaleX(0.7662);">Normal</div>
<div class="t" style="left:864.30px;top:58.65px;font-size:8.5px;font-weight:400;color:#e6e6e6;transform:scaleX(0.7920);">Opacity:</div>
<div class="t" style="left:895.50px;top:58.65px;font-size:8.5px;font-weight:400;color:#ececec;transform:scaleX(0.7356);">100%</div>
<div class="t" style="left:776.00px;top:77.05px;font-size:8.5px;font-weight:400;color:#7e7e7e;transform:scaleX(0.7625);">Lock:</div>
<div class="t" style="left:879.40px;top:77.05px;font-size:8.5px;font-weight:400;color:#e6e6e6;transform:scaleX(0.7254);">Fill:</div>
<div class="t" style="left:895.50px;top:77.05px;font-size:8.5px;font-weight:400;color:#ececec;transform:scaleX(0.7356);">100%</div>
<div class="t" style="left:818.00px;top:102.05px;font-size:8.5px;font-weight:400;color:#ececec;transform:scaleX(0.7942);">Background copy 2</div>
<div class="t" style="left:818.30px;top:130.05px;font-size:8.5px;font-weight:400;color:#e6e6e6;transform:scaleX(0.8088);font-style:italic;">Background</div>
<div class="t" style="left:388.40px;top:51.05px;font-size:8.5px;font-weight:400;color:#b9b9b9;transform:scaleX(0.8896);">image01.psd @ 18.3% (Background copy 2, RGB/8)</div>
<div class="t" style="left:588.50px;top:51.05px;font-size:8.5px;font-weight:700;color:#f2f2f2;transform:scaleX(0.8656);">Untitled-1 @ 20.2% (Background copy 2, RGB/8) *</div>
<div class="t" style="left:693.60px;top:377.80px;font-size:7.5px;font-weight:400;color:#f4f4f4;transform:scaleX(0.8610);">406 px</div>
<div class="t" style="left:693.60px;top:386.00px;font-size:7.5px;font-weight:400;color:#f4f4f4;transform:scaleX(0.8610);">263 px</div>
<div class="t" style="left:822.00px;top:709.44px;font-size:6.8px;font-weight:700;color:#c6c6c6;letter-spacing:1.970px;font-family:'DejaVu Sans',sans-serif;">ykdes.com</div>
</div>
</body>
</html>
